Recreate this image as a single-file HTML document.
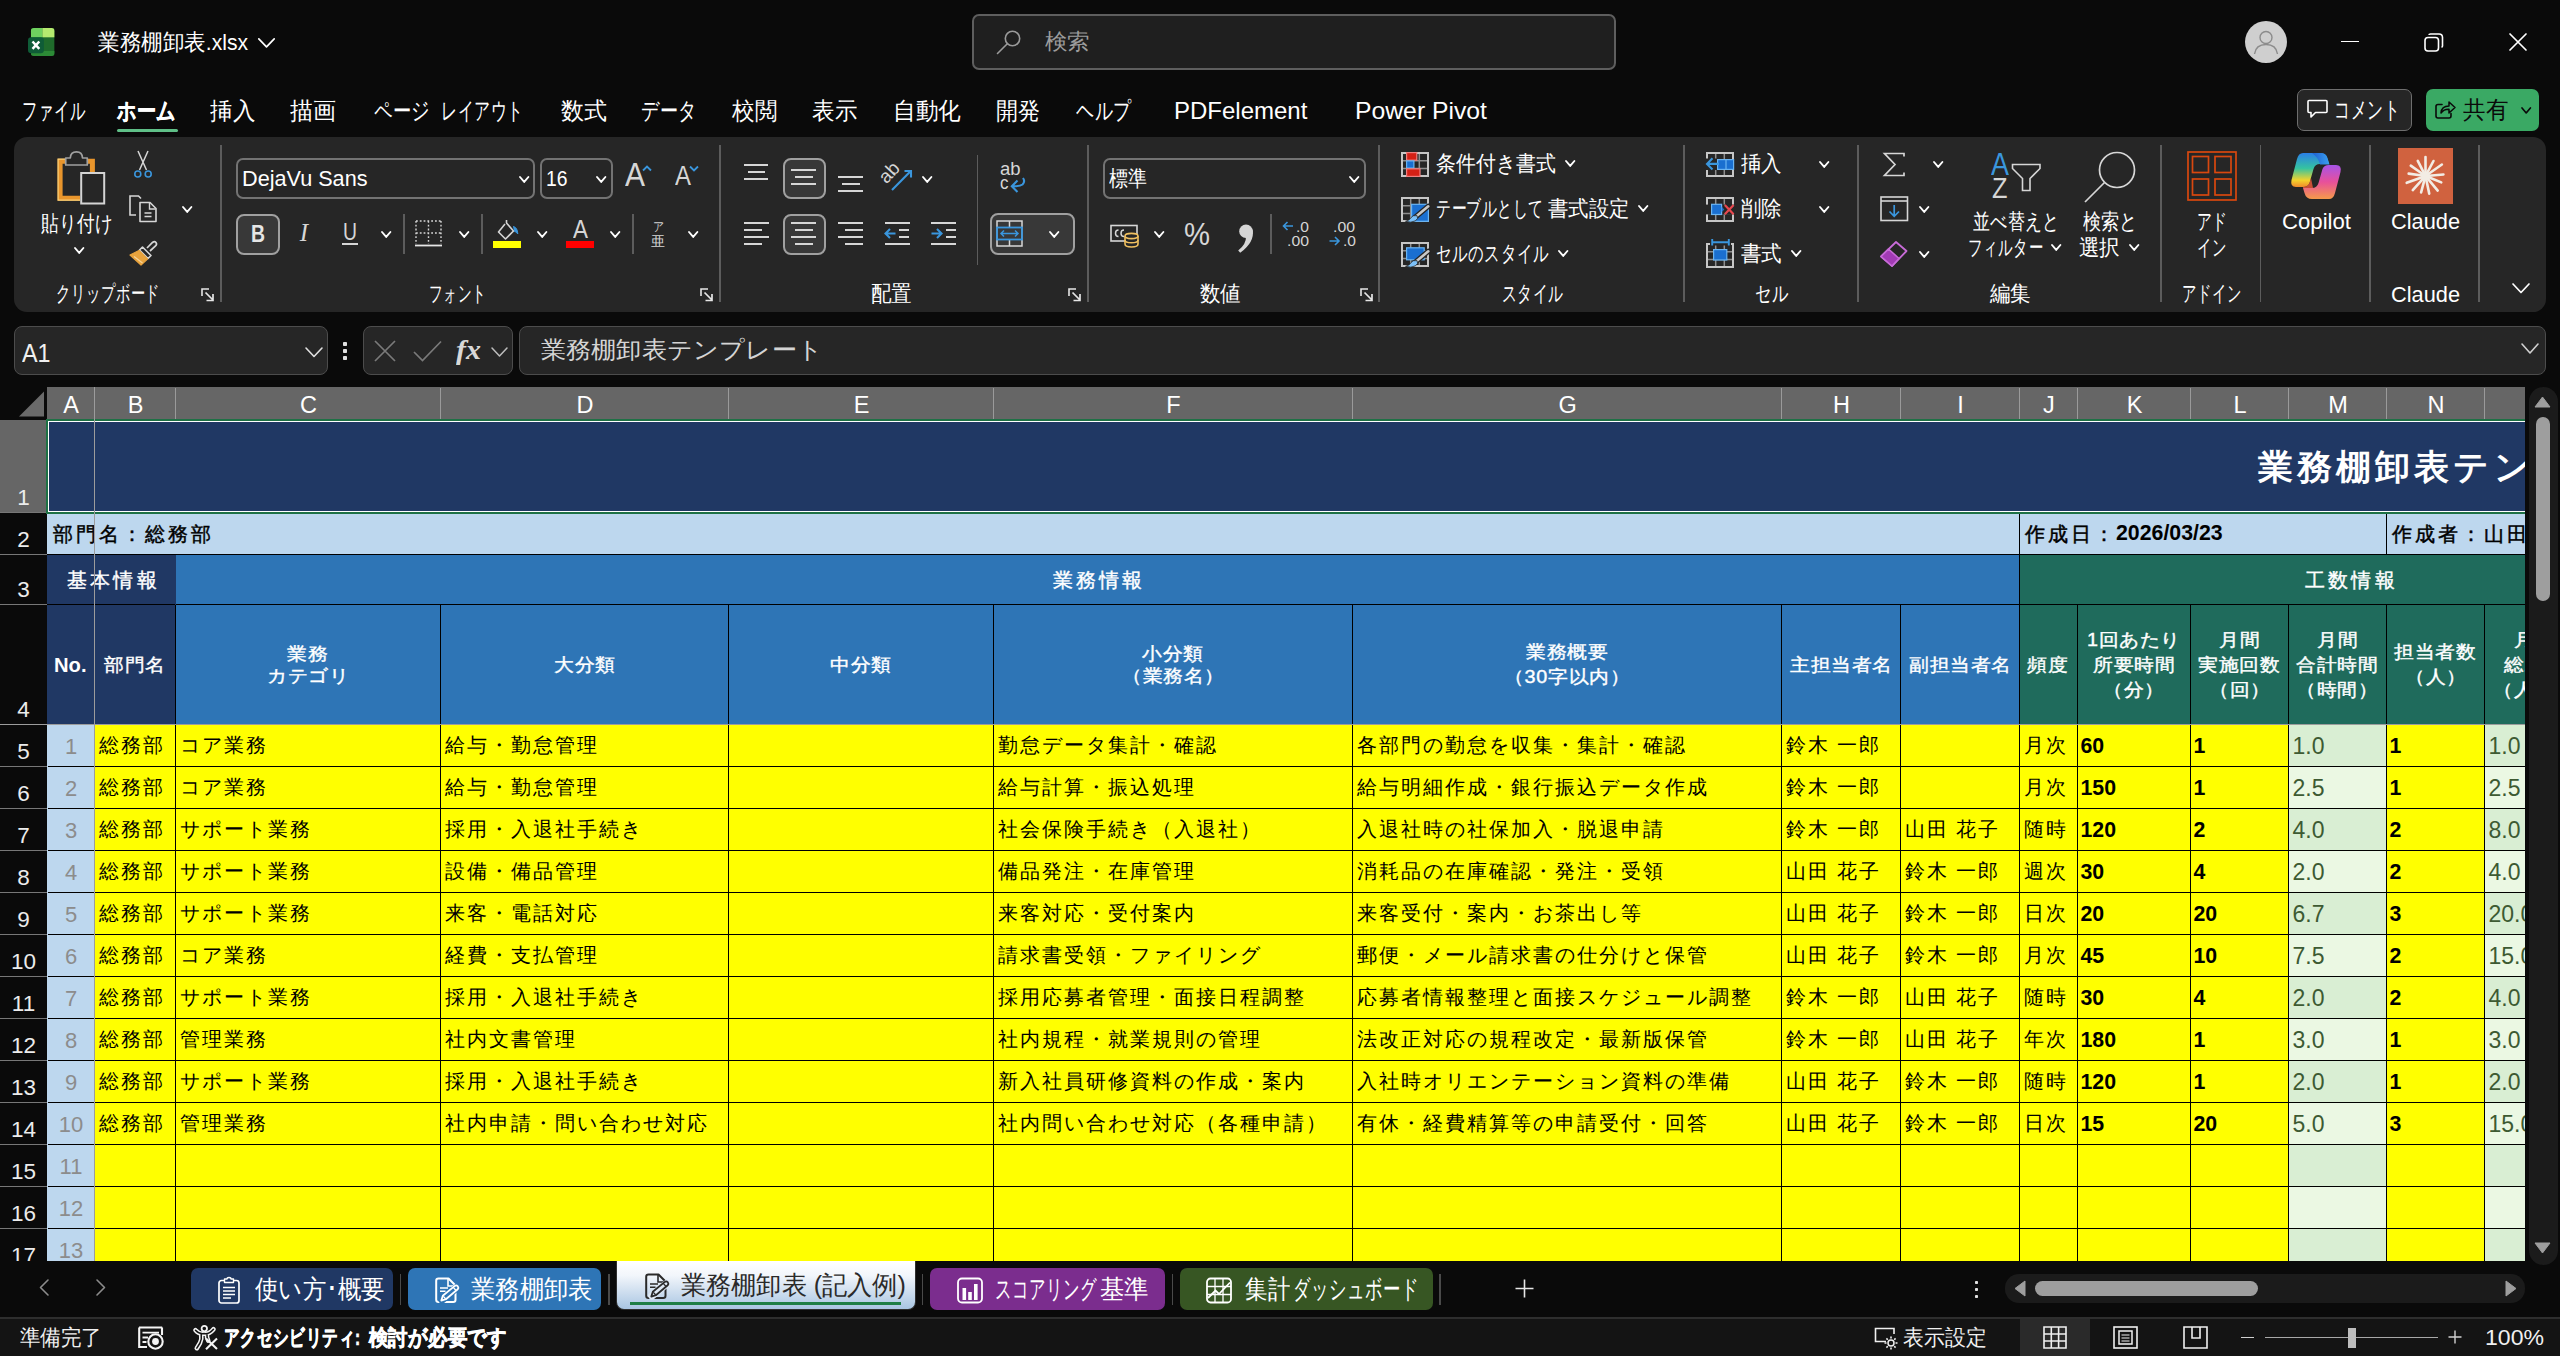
<!DOCTYPE html><html lang="ja"><head><meta charset="utf-8"><title>Excel</title><style>
html,body{margin:0;padding:0;background:#0a0a0a;overflow:hidden;}
body{width:2560px;height:1356px;overflow:hidden;position:relative;font-family:"Liberation Sans",sans-serif;}
.a{position:absolute;}
.t{position:absolute;white-space:nowrap;transform-origin:0 50%;}
svg{overflow:visible;}
</style></head><body>
<svg class="a" style="left:28px;top:28px;" width="27" height="28" viewBox="0 0 27 28"><defs><clipPath id="xlc"><rect x="2.8" y="0" width="23.8" height="27.9" rx="3.2"/></clipPath></defs>
<g clip-path="url(#xlc)"><rect x="2.8" y="0" width="23.8" height="27.9" fill="#1f6b2b"/>
<rect x="2.8" y="0" width="11.6" height="9.3" fill="#6fd15f"/><rect x="14.4" y="0" width="12.2" height="9.3" fill="#b5ea6f"/>
<rect x="2.8" y="9.3" width="11.6" height="13" fill="#2f9a3c"/><rect x="2.8" y="23" width="23.8" height="5" fill="#2c8a36"/></g>
<rect x="0" y="9.3" width="15.9" height="15.9" rx="3.2" fill="#0f5c37"/>
<path d="M4.5 13.5 L11.3 20.8 M11.3 13.5 L4.5 20.8" stroke="#fff" stroke-width="2.5" stroke-linecap="butt"/></svg>
<span class="t" style="left:98.0px;top:28.0px;font-size:22.5px;line-height:29px;color:#ffffff;transform:scaleX(0.9375);">業務棚卸表.xlsx</span>
<svg class="a" style="left:257.5px;top:38px;" width="17" height="10" viewBox="0 0 17 10"><path d="M0.8 0.8 L8.5 8.8 L16.2 0.8" fill="none" stroke="#fff" stroke-width="1.7" stroke-linecap="round" stroke-linejoin="round"/></svg>
<div class="a" style="left:972px;top:14px;width:644px;height:56px;background:#1f1f1f;border:2px solid #5e5e5e;box-sizing:border-box;border-radius:7px;"></div>
<svg class="a" style="left:996px;top:29px;" width="26" height="26" viewBox="0 0 26 26"><circle cx="16.5" cy="9.5" r="7.2" fill="none" stroke="#9a9a9a" stroke-width="1.6"/><path d="M11.3 14.7 L1.5 24.5" stroke="#9a9a9a" stroke-width="1.6" stroke-linecap="round"/></svg>
<span class="t" style="left:1045.0px;top:26.5px;font-size:22px;line-height:29px;color:#9c9c9c;transform:scaleX(1.0227);">検索</span>
<svg class="a" style="left:2245px;top:21px;" width="42" height="42" viewBox="0 0 42 42"><circle cx="21" cy="21" r="21" fill="#cfcfcf"/>
<circle cx="21" cy="16.5" r="6" fill="none" stroke="#8c8c8c" stroke-width="1.4"/>
<path d="M9.5 33 C10.5 25.5 15 23.5 21 23.5 C27 23.5 31.5 25.5 32.5 33" fill="none" stroke="#8c8c8c" stroke-width="1.4"/></svg>
<div class="a" style="left:2341px;top:40.5px;width:18px;height:1.6px;background:#fff;"></div>
<svg class="a" style="left:2424px;top:33px;" width="20" height="19" viewBox="0 0 20 19"><rect x="1" y="4.5" width="13.5" height="13.5" rx="3" fill="none" stroke="#fff" stroke-width="1.6"/><path d="M5 2 Q5 1 6.5 1 H15 Q18.5 1 18.5 4.5 V13 Q18.5 14 17.5 14.3" fill="none" stroke="#fff" stroke-width="1.6"/></svg>
<svg class="a" style="left:2509px;top:33px;" width="18" height="18" viewBox="0 0 18 18"><path d="M1 1 L17 17 M17 1 L1 17" stroke="#fff" stroke-width="1.7" stroke-linecap="round"/></svg>
<span class="t" style="left:22.0px;top:94.5px;font-size:24px;line-height:31px;color:#ffffff;transform:scaleX(0.6400);">ファイル</span>
<span class="t" style="left:117.0px;top:94.5px;font-size:24px;line-height:31px;color:#ffffff;font-weight:700;-webkit-text-stroke:0.5px #ffffff;transform:scaleX(0.7973);">ホーム</span>
<span class="t" style="left:210.0px;top:94.5px;font-size:24px;line-height:31px;color:#ffffff;transform:scaleX(0.9375);">挿入</span>
<span class="t" style="left:290.0px;top:94.5px;font-size:24px;line-height:31px;color:#ffffff;transform:scaleX(0.9583);">描画</span>
<span class="t" style="left:373.5px;top:94.5px;font-size:24px;line-height:31px;color:#ffffff;transform:scaleX(0.7635);">ページ</span>
<span class="t" style="left:440.5px;top:94.5px;font-size:24px;line-height:31px;color:#ffffff;transform:scaleX(0.6640);">レイアウト</span>
<span class="t" style="left:561.0px;top:94.5px;font-size:24px;line-height:31px;color:#ffffff;transform:scaleX(0.9583);">数式</span>
<span class="t" style="left:641.0px;top:94.5px;font-size:24px;line-height:31px;color:#ffffff;transform:scaleX(0.7568);">データ</span>
<span class="t" style="left:732.0px;top:94.5px;font-size:24px;line-height:31px;color:#ffffff;transform:scaleX(0.9375);">校閲</span>
<span class="t" style="left:812.0px;top:94.5px;font-size:24px;line-height:31px;color:#ffffff;transform:scaleX(0.9375);">表示</span>
<span class="t" style="left:893.0px;top:94.5px;font-size:24px;line-height:31px;color:#ffffff;transform:scaleX(0.9444);">自動化</span>
<span class="t" style="left:996.0px;top:94.5px;font-size:24px;line-height:31px;color:#ffffff;transform:scaleX(0.9167);">開発</span>
<span class="t" style="left:1076.0px;top:94.5px;font-size:24px;line-height:31px;color:#ffffff;transform:scaleX(0.7467);">ヘルプ</span>
<span class="t" style="left:1174.0px;top:94.5px;font-size:24px;line-height:31px;color:#ffffff;">PDFelement</span>
<span class="t" style="left:1355.0px;top:94.5px;font-size:24px;line-height:31px;color:#ffffff;transform:scaleX(1.0307);">Power Pivot</span>
<div class="a" style="left:117px;top:128.5px;width:61px;height:3.5px;background:#5fbf87;border-radius:2px;"></div>
<div class="a" style="left:2297px;top:89px;width:115px;height:42px;background:#262626;border:1.5px solid #6e6e6e;box-sizing:border-box;border-radius:7px;"></div>
<svg class="a" style="left:2307px;top:99px;" width="22" height="20" viewBox="0 0 22 20"><path d="M2 1.5 H19 Q20 1.5 20 2.5 V12.5 Q20 13.5 19 13.5 H8.5 L4 18 V13.5 H2 Q1 13.5 1 12.5 V2.5 Q1 1.5 2 1.5 Z" fill="none" stroke="#fff" stroke-width="1.6" stroke-linejoin="round"/></svg>
<span class="t" style="left:2334.0px;top:94.0px;font-size:24px;line-height:31px;color:#ffffff;transform:scaleX(0.6600);">コメント</span>
<div class="a" style="left:2426px;top:89px;width:113px;height:42px;background:#3aa964;border-radius:7px;"></div>
<svg class="a" style="left:2434px;top:99px;" width="22" height="21" viewBox="0 0 22 21"><path d="M8 5.5 H4 Q2 5.5 2 7.5 V17 Q2 19 4 19 H15 Q17 19 17 17 V14.5" fill="none" stroke="#0a0a0a" stroke-width="1.6" stroke-linecap="round"/><path d="M7 14 Q7.5 7 15 7 V3 L21 8.5 L15 14 V10.3 Q10 10 7 14 Z" fill="none" stroke="#0a0a0a" stroke-width="1.5" stroke-linejoin="round"/></svg>
<span class="t" style="left:2463.0px;top:94.0px;font-size:24px;line-height:31px;color:#0a0a0a;transform:scaleX(0.9375);">共有</span>
<svg class="a" style="left:2519.8px;top:106.025px" width="12.4" height="8.95" viewBox="-2 -2 12.4 8.95"><path d="M0 0 L4.2 4.95 L8.4 0" fill="none" stroke="#0a0a0a" stroke-width="1.7" stroke-linecap="round" stroke-linejoin="round"/></svg>
<div class="a" style="left:14px;top:137px;width:2532px;height:175px;background:#262626;border-radius:13px;"></div>
<svg class="a" style="left:57px;top:150px;" width="49" height="55" viewBox="0 0 49 55"><path d="M9 11.2 H3.1 V48.2 H23" fill="none" stroke="#e8952c" stroke-width="5"/><path d="M29 11.2 H35.4 V22.5" fill="none" stroke="#e8952c" stroke-width="5"/>
<path d="M9 9.2 H1.1 V50.2 H23" fill="none" stroke="#f8d07a" stroke-width="1.2"/>
<path d="M8.7 15 V8 H13.3 Q13.5 1.8 19.5 1.8 Q25.3 1.8 25.5 8 H30.3 V15 Z" fill="#262626" stroke="#a0a0a0" stroke-width="1.7" stroke-linejoin="round"/>
<rect x="24.2" y="23" width="23" height="30.5" fill="#262626" stroke="#d4d4d4" stroke-width="2"/></svg>
<span class="t" style="left:41.0px;top:209.0px;font-size:22px;line-height:29px;color:#ffffff;transform:scaleX(0.8000);">貼り付け</span>
<svg class="a" style="left:72.8px;top:245.525px" width="12.4" height="8.95" viewBox="-2 -2 12.4 8.95"><path d="M0 0 L4.2 4.95 L8.4 0" fill="none" stroke="#ffffff" stroke-width="1.9" stroke-linecap="round" stroke-linejoin="round"/></svg>
<svg class="a" style="left:133px;top:149px;" width="20" height="30" viewBox="0 0 20 30"><path d="M5 2 L13.5 21 M15 2 L6.5 21" stroke="#d6d6d6" stroke-width="1.5" fill="none"/><circle cx="4.8" cy="25" r="3" fill="none" stroke="#3a96dd" stroke-width="1.6"/><circle cx="15.2" cy="25" r="3" fill="none" stroke="#3a96dd" stroke-width="1.6"/></svg>
<svg class="a" style="left:128px;top:194px;" width="30" height="30" viewBox="0 0 30 30"><path d="M8 21 H2 V2 H10.5 L13 4.5" fill="none" stroke="#d6d6d6" stroke-width="1.6"/><path d="M12 8.5 H22 L28 14.5 V27.5 H12 Z" fill="#262626" stroke="#d6d6d6" stroke-width="1.6" stroke-linejoin="round"/><path d="M21.5 9 V15 H27.5" fill="none" stroke="#d6d6d6" stroke-width="1.4"/><path d="M16.5 19 H23.5 M16.5 22.5 H23.5" stroke="#d6d6d6" stroke-width="1.5"/></svg>
<svg class="a" style="left:180.8px;top:205.025px" width="12.4" height="8.95" viewBox="-2 -2 12.4 8.95"><path d="M0 0 L4.2 4.95 L8.4 0" fill="none" stroke="#ffffff" stroke-width="1.9" stroke-linecap="round" stroke-linejoin="round"/></svg>
<svg class="a" style="left:128px;top:239px;" width="30" height="28" viewBox="0 0 30 28"><path d="M19 9 L24.5 3.5 Q26.5 1.8 28 3.5 Q29.3 5.2 27.5 7 L22 12" fill="none" stroke="#d6d6d6" stroke-width="1.7"/><path d="M14.5 8 L23 16.5 L20 19.5 L11.5 11 Z" fill="none" stroke="#d6d6d6" stroke-width="1.6" stroke-linejoin="round"/><path d="M11 11.5 L2 16 L13 26 L19.5 20 Z" fill="#e8a33d" stroke="#e8a33d" stroke-width="1.2" stroke-linejoin="round"/><path d="M6 17.5 L14.5 24" stroke="#f6d49a" stroke-width="1.2"/></svg>
<span class="t" style="left:55.5px;top:280.0px;font-size:21.5px;line-height:28px;color:#ffffff;transform:scaleX(0.6500);">クリップボード</span>
<svg class="a" style="left:201px;top:288px;" width="14" height="14" viewBox="0 0 14 14"><path d="M1 8 V1 H8" fill="none" stroke="#e6e6e6" stroke-width="1.6"/><path d="M4.5 4.5 L12 12 M12 6 V12.5 H5.5" fill="none" stroke="#e6e6e6" stroke-width="1.7"/></svg>
<div class="a" style="left:220.25px;top:145px;width:1.5px;height:157px;background:#5c5c5c;"></div>
<div class="a" style="left:236px;top:157.5px;width:299px;height:41.5px;border:2px solid #737373;box-sizing:border-box;border-radius:7px;"></div>
<span class="t" style="left:241.5px;top:164.5px;font-size:21.5px;line-height:28px;color:#ffffff;transform:scaleX(1.0064);">DejaVu Sans</span>
<svg class="a" style="left:517.8px;top:175.025px" width="12.4" height="8.95" viewBox="-2 -2 12.4 8.95"><path d="M0 0 L4.2 4.95 L8.4 0" fill="none" stroke="#ffffff" stroke-width="1.9" stroke-linecap="round" stroke-linejoin="round"/></svg>
<div class="a" style="left:539.5px;top:157.5px;width:73px;height:41.5px;border:2px solid #737373;box-sizing:border-box;border-radius:7px;"></div>
<span class="t" style="left:545.5px;top:164.5px;font-size:21.5px;line-height:28px;color:#ffffff;transform:scaleX(0.8988);">16</span>
<svg class="a" style="left:594.8px;top:175.025px" width="12.4" height="8.95" viewBox="-2 -2 12.4 8.95"><path d="M0 0 L4.2 4.95 L8.4 0" fill="none" stroke="#ffffff" stroke-width="1.9" stroke-linecap="round" stroke-linejoin="round"/></svg>
<span class="t" style="left:625.0px;top:153.0px;font-size:33px;line-height:43px;color:#d6d6d6;transform:scaleX(0.9084);">A</span>
<svg class="a" style="left:642px;top:165px;" width="10" height="7" viewBox="0 0 10 7"><path d="M1 5.5 L5 1.5 L9 5.5" fill="none" stroke="#3a96dd" stroke-width="1.8"/></svg>
<span class="t" style="left:674.5px;top:159.0px;font-size:27px;line-height:35px;color:#d6d6d6;transform:scaleX(0.8881);">A</span>
<svg class="a" style="left:689px;top:165px;" width="10" height="7" viewBox="0 0 10 7"><path d="M1 1.5 L5 5.5 L9 1.5" fill="none" stroke="#3a96dd" stroke-width="1.8"/></svg>
<div class="a" style="left:236px;top:213.5px;width:43.5px;height:41px;background:#383838;border:2px solid #a0a0a0;box-sizing:border-box;border-radius:8px;"></div>
<span class="t" style="left:250.5px;top:217.5px;font-size:24px;line-height:31px;color:#e6e6e6;font-weight:700;transform:scaleX(0.8072);">B</span>
<span class="t" style="left:299.8px;top:217.0px;font-size:25px;line-height:32px;color:#d6d6d6;font-family:'Liberation Serif',serif;font-style:italic;">I</span>
<span class="t" style="left:342.5px;top:216.5px;font-size:23px;line-height:30px;color:#d6d6d6;transform:scaleX(0.8421);">U</span>
<div class="a" style="left:342px;top:243.3px;width:16px;height:1.6px;background:#d6d6d6;"></div>
<svg class="a" style="left:379.8px;top:230.025px" width="12.4" height="8.95" viewBox="-2 -2 12.4 8.95"><path d="M0 0 L4.2 4.95 L8.4 0" fill="none" stroke="#ffffff" stroke-width="1.9" stroke-linecap="round" stroke-linejoin="round"/></svg>
<div class="a" style="left:403.25px;top:214px;width:1.5px;height:40px;background:#5c5c5c;"></div>
<svg class="a" style="left:415px;top:220px;" width="27" height="27" viewBox="0 0 27 27"><g stroke="#d6d6d6" stroke-width="1.4" stroke-dasharray="1.8 2" fill="none"><path d="M1 1 H26 M1 13 H26 M1 1 V24 M13.5 1 V24 M26 1 V24"/></g><path d="M0 25.5 H27" stroke="#e6e6e6" stroke-width="1.8"/></svg>
<svg class="a" style="left:457.8px;top:230.025px" width="12.4" height="8.95" viewBox="-2 -2 12.4 8.95"><path d="M0 0 L4.2 4.95 L8.4 0" fill="none" stroke="#ffffff" stroke-width="1.9" stroke-linecap="round" stroke-linejoin="round"/></svg>
<div class="a" style="left:481.25px;top:214px;width:1.5px;height:40px;background:#5c5c5c;"></div>
<svg class="a" style="left:496px;top:219px;" width="24" height="22" viewBox="0 0 24 22"><path d="M9 5 L2.5 13 L9.5 20 L17.5 12 L10.5 4 V1" fill="none" stroke="#d6d6d6" stroke-width="1.6" stroke-linejoin="round"/><path d="M17 7.5 Q21.5 8 21.8 15 Q20 12.5 18 12" fill="#3a96dd" stroke="#3a96dd" stroke-width="1"/></svg>
<div class="a" style="left:493px;top:241px;width:28px;height:6.5px;background:#ffff00;"></div>
<svg class="a" style="left:535.8px;top:230.025px" width="12.4" height="8.95" viewBox="-2 -2 12.4 8.95"><path d="M0 0 L4.2 4.95 L8.4 0" fill="none" stroke="#ffffff" stroke-width="1.9" stroke-linecap="round" stroke-linejoin="round"/></svg>
<span class="t" style="left:572.5px;top:213.0px;font-size:25px;line-height:32px;color:#d6d6d6;transform:scaleX(0.8989);">A</span>
<div class="a" style="left:566px;top:241px;width:28px;height:6.5px;background:#ff0000;"></div>
<svg class="a" style="left:608.8px;top:230.025px" width="12.4" height="8.95" viewBox="-2 -2 12.4 8.95"><path d="M0 0 L4.2 4.95 L8.4 0" fill="none" stroke="#ffffff" stroke-width="1.9" stroke-linecap="round" stroke-linejoin="round"/></svg>
<div class="a" style="left:632.25px;top:214px;width:1.5px;height:40px;background:#5c5c5c;"></div>
<span class="t" style="left:652.5px;top:217.5px;font-size:13px;line-height:17px;color:#d6d6d6;transform:scaleX(0.8462);">ア</span>
<span class="t" style="left:651.0px;top:231.5px;font-size:14px;line-height:18px;color:#d6d6d6;">亜</span>
<svg class="a" style="left:686.8px;top:230.025px" width="12.4" height="8.95" viewBox="-2 -2 12.4 8.95"><path d="M0 0 L4.2 4.95 L8.4 0" fill="none" stroke="#ffffff" stroke-width="1.9" stroke-linecap="round" stroke-linejoin="round"/></svg>
<span class="t" style="left:429.0px;top:280.0px;font-size:21.5px;line-height:28px;color:#ffffff;transform:scaleX(0.6196);">フォント</span>
<svg class="a" style="left:700px;top:288px;" width="14" height="14" viewBox="0 0 14 14"><path d="M1 8 V1 H8" fill="none" stroke="#e6e6e6" stroke-width="1.6"/><path d="M4.5 4.5 L12 12 M12 6 V12.5 H5.5" fill="none" stroke="#e6e6e6" stroke-width="1.7"/></svg>
<div class="a" style="left:719.25px;top:145px;width:1.5px;height:157px;background:#5c5c5c;"></div>
<div class="a" style="left:744.0px;top:164.0px;width:24px;height:2.0px;background:#d6d6d6;"></div>
<div class="a" style="left:747.5px;top:171.0px;width:17px;height:2.0px;background:#d6d6d6;"></div>
<div class="a" style="left:744.0px;top:178.0px;width:24px;height:2.0px;background:#d6d6d6;"></div>
<div class="a" style="left:782.5px;top:157.5px;width:43px;height:41px;background:#383838;border:2px solid #a0a0a0;box-sizing:border-box;border-radius:8px;"></div>
<div class="a" style="left:791.0px;top:169.0px;width:25px;height:2.0px;background:#d6d6d6;"></div>
<div class="a" style="left:794.5px;top:176.0px;width:18px;height:2.0px;background:#d6d6d6;"></div>
<div class="a" style="left:791.0px;top:183.0px;width:25px;height:2.0px;background:#d6d6d6;"></div>
<div class="a" style="left:838.0px;top:176.0px;width:25px;height:2.0px;background:#d6d6d6;"></div>
<div class="a" style="left:841.5px;top:183.0px;width:18px;height:2.0px;background:#d6d6d6;"></div>
<div class="a" style="left:838.0px;top:190.0px;width:25px;height:2.0px;background:#d6d6d6;"></div>
<svg class="a" style="left:880px;top:162px;" width="33" height="30" viewBox="0 0 33 30"><g transform="translate(6.5 22.5) rotate(-47)"><text x="0" y="0" font-family="Liberation Sans,sans-serif" font-size="19" fill="#d6d6d6">ab</text></g><path d="M12 28 L30.5 9.3 M24.5 9 H31 V15.6" fill="none" stroke="#3a96dd" stroke-width="2.1"/></svg>
<svg class="a" style="left:920.8px;top:174.525px" width="12.4" height="8.95" viewBox="-2 -2 12.4 8.95"><path d="M0 0 L4.2 4.95 L8.4 0" fill="none" stroke="#ffffff" stroke-width="1.9" stroke-linecap="round" stroke-linejoin="round"/></svg>
<div class="a" style="left:976.75px;top:155px;width:1.5px;height:110px;background:#5c5c5c;"></div>
<span class="t" style="left:1000.0px;top:158.0px;font-size:18px;line-height:23px;color:#d6d6d6;transform:scaleX(1.0284);">ab</span>
<span class="t" style="left:1000.0px;top:172.0px;font-size:18px;line-height:23px;color:#d6d6d6;transform:scaleX(0.9444);">c</span>
<svg class="a" style="left:1010px;top:177px;" width="16" height="16" viewBox="0 0 16 16"><path d="M13 1 Q15.5 4.5 12.5 7.5 Q10 9.5 2.5 9.3 M7.5 3.5 L1.8 9.2 L7.5 15" fill="none" stroke="#3a96dd" stroke-width="2.1"/></svg>
<div class="a" style="left:744px;top:222.0px;width:25px;height:2.0px;background:#d6d6d6;"></div>
<div class="a" style="left:744px;top:229.0px;width:18px;height:2.0px;background:#d6d6d6;"></div>
<div class="a" style="left:744px;top:236.0px;width:25px;height:2.0px;background:#d6d6d6;"></div>
<div class="a" style="left:744px;top:243.0px;width:18px;height:2.0px;background:#d6d6d6;"></div>
<div class="a" style="left:782.5px;top:213.5px;width:43px;height:41px;background:#383838;border:2px solid #a0a0a0;box-sizing:border-box;border-radius:8px;"></div>
<div class="a" style="left:791.0px;top:222.0px;width:25px;height:2.0px;background:#d6d6d6;"></div>
<div class="a" style="left:794.5px;top:229.0px;width:18px;height:2.0px;background:#d6d6d6;"></div>
<div class="a" style="left:791.0px;top:236.0px;width:25px;height:2.0px;background:#d6d6d6;"></div>
<div class="a" style="left:794.5px;top:243.0px;width:18px;height:2.0px;background:#d6d6d6;"></div>
<div class="a" style="left:838px;top:222.0px;width:25px;height:2.0px;background:#d6d6d6;"></div>
<div class="a" style="left:845px;top:229.0px;width:18px;height:2.0px;background:#d6d6d6;"></div>
<div class="a" style="left:838px;top:236.0px;width:25px;height:2.0px;background:#d6d6d6;"></div>
<div class="a" style="left:845px;top:243.0px;width:18px;height:2.0px;background:#d6d6d6;"></div>
<div class="a" style="left:884.5px;top:222.0px;width:25px;height:2.0px;background:#d6d6d6;"></div>
<div class="a" style="left:898.8px;top:229.0px;width:10.7px;height:2.0px;background:#d6d6d6;"></div>
<div class="a" style="left:898.8px;top:236.0px;width:10.7px;height:2.0px;background:#d6d6d6;"></div>
<div class="a" style="left:884.5px;top:243.0px;width:25px;height:2.0px;background:#d6d6d6;"></div>
<svg class="a" style="left:884px;top:227.5px;" width="12" height="11" viewBox="0 0 12 11"><path d="M11.5 5.5 H1.5 M6 1 L1.5 5.5 L6 10" fill="none" stroke="#3a96dd" stroke-width="2.1"/></svg>
<div class="a" style="left:931.4px;top:222.0px;width:25px;height:2.0px;background:#d6d6d6;"></div>
<div class="a" style="left:945.6999999999999px;top:229.0px;width:10.7px;height:2.0px;background:#d6d6d6;"></div>
<div class="a" style="left:945.6999999999999px;top:236.0px;width:10.7px;height:2.0px;background:#d6d6d6;"></div>
<div class="a" style="left:931.4px;top:243.0px;width:25px;height:2.0px;background:#d6d6d6;"></div>
<svg class="a" style="left:931px;top:227.5px;" width="12" height="11" viewBox="0 0 12 11"><path d="M0.5 5.5 H10.5 M6 1 L10.5 5.5 L6 10" fill="none" stroke="#3a96dd" stroke-width="2.1"/></svg>
<div class="a" style="left:989.5px;top:213px;width:85.5px;height:42px;background:#383838;border:2px solid #a0a0a0;box-sizing:border-box;border-radius:8px;"></div>
<svg class="a" style="left:996px;top:220px;" width="27" height="27" viewBox="0 0 27 27"><path d="M1 1 H26 V26 H1 Z M13.5 1 V7.5 M13.5 19.5 V26" fill="none" stroke="#d6d6d6" stroke-width="1.5"/><rect x="1" y="7.5" width="25" height="12" fill="none" stroke="#3a96dd" stroke-width="1.8"/><path d="M5 13.5 H22 M8 10.5 L5 13.5 L8 16.5 M19 10.5 L22 13.5 L19 16.5" fill="none" stroke="#3a96dd" stroke-width="1.5"/></svg>
<svg class="a" style="left:1047.8px;top:230.025px" width="12.4" height="8.95" viewBox="-2 -2 12.4 8.95"><path d="M0 0 L4.2 4.95 L8.4 0" fill="none" stroke="#ffffff" stroke-width="1.9" stroke-linecap="round" stroke-linejoin="round"/></svg>
<span class="t" style="left:870.5px;top:280.0px;font-size:21.5px;line-height:28px;color:#ffffff;transform:scaleX(0.9318);">配置</span>
<svg class="a" style="left:1068px;top:288px;" width="14" height="14" viewBox="0 0 14 14"><path d="M1 8 V1 H8" fill="none" stroke="#e6e6e6" stroke-width="1.6"/><path d="M4.5 4.5 L12 12 M12 6 V12.5 H5.5" fill="none" stroke="#e6e6e6" stroke-width="1.7"/></svg>
<div class="a" style="left:1087.25px;top:145px;width:1.5px;height:157px;background:#5c5c5c;"></div>
<div class="a" style="left:1103px;top:157.5px;width:262.5px;height:41.5px;border:2px solid #737373;box-sizing:border-box;border-radius:7px;"></div>
<span class="t" style="left:1109.0px;top:164.5px;font-size:21.5px;line-height:28px;color:#ffffff;transform:scaleX(0.8636);">標準</span>
<svg class="a" style="left:1347.8px;top:175.025px" width="12.4" height="8.95" viewBox="-2 -2 12.4 8.95"><path d="M0 0 L4.2 4.95 L8.4 0" fill="none" stroke="#ffffff" stroke-width="1.9" stroke-linecap="round" stroke-linejoin="round"/></svg>
<svg class="a" style="left:1110px;top:224px;" width="30" height="24" viewBox="0 0 30 24"><rect x="1" y="1.5" width="26" height="15.5" fill="none" stroke="#d6d6d6" stroke-width="1.6"/><path d="M8.5 6 Q5.5 6 5.5 9.2 Q5.5 12.5 8.5 12.5 M14 6 Q11 6 11 9.2 Q11 12.5 14 12.5" fill="none" stroke="#d6d6d6" stroke-width="1.5"/><path d="M15 12 V20 Q15 23 21.5 23 Q28 23 28 20 V12" fill="#262626" stroke="#f0c060" stroke-width="1.6"/><ellipse cx="21.5" cy="12" rx="6.5" ry="2.6" fill="#262626" stroke="#f0c060" stroke-width="1.6"/><path d="M15 16 Q15 18.8 21.5 18.8 Q28 18.8 28 16" fill="none" stroke="#f0c060" stroke-width="1.5"/></svg>
<svg class="a" style="left:1152.8px;top:230.025px" width="12.4" height="8.95" viewBox="-2 -2 12.4 8.95"><path d="M0 0 L4.2 4.95 L8.4 0" fill="none" stroke="#ffffff" stroke-width="1.9" stroke-linecap="round" stroke-linejoin="round"/></svg>
<span class="t" style="left:1184.0px;top:212.5px;font-size:32px;line-height:42px;color:#d6d6d6;transform:scaleX(0.9138);">%</span>
<svg class="a" style="left:1237px;top:223.5px;" width="17" height="30" viewBox="0 0 17 30"><circle cx="9" cy="7.3" r="6.8" fill="#d6d6d6"/><path d="M15.6 5.5 Q18 18 3.2 28.8 L1.2 26.5 Q9.5 20 9 12 Z" fill="#d6d6d6"/></svg>
<div class="a" style="left:1270.25px;top:214px;width:1.5px;height:40px;background:#5c5c5c;"></div>
<span class="t" style="left:1296.0px;top:216.5px;font-size:15px;line-height:20px;color:#d6d6d6;transform:scaleX(1.0387);">.0</span>
<span class="t" style="left:1286.5px;top:230.5px;font-size:15px;line-height:20px;color:#d6d6d6;transform:scaleX(1.0547);">.00</span>
<svg class="a" style="left:1282px;top:221px;" width="12" height="10" viewBox="0 0 12 10"><path d="M11 5 H1.5 M5.5 1 L1.5 5 L5.5 9" fill="none" stroke="#3a96dd" stroke-width="1.6"/></svg>
<span class="t" style="left:1333.0px;top:216.5px;font-size:15px;line-height:20px;color:#d6d6d6;transform:scaleX(1.0547);">.00</span>
<span class="t" style="left:1342.5px;top:230.5px;font-size:15px;line-height:20px;color:#d6d6d6;transform:scaleX(1.0387);">.0</span>
<svg class="a" style="left:1329px;top:236px;" width="12" height="10" viewBox="0 0 12 10"><path d="M0.5 5 H10 M6 1 L10 5 L6 9" fill="none" stroke="#3a96dd" stroke-width="1.6"/></svg>
<span class="t" style="left:1199.5px;top:280.0px;font-size:21.5px;line-height:28px;color:#ffffff;transform:scaleX(0.9318);">数値</span>
<svg class="a" style="left:1359.5px;top:288px;" width="14" height="14" viewBox="0 0 14 14"><path d="M1 8 V1 H8" fill="none" stroke="#e6e6e6" stroke-width="1.6"/><path d="M4.5 4.5 L12 12 M12 6 V12.5 H5.5" fill="none" stroke="#e6e6e6" stroke-width="1.7"/></svg>
<div class="a" style="left:1378.25px;top:145px;width:1.5px;height:157px;background:#5c5c5c;"></div>
<svg class="a" style="left:1401px;top:151.5px;" width="28" height="25" viewBox="0 0 28 25"><g fill="none"><path d="M1 8.8 H27 M1 16.5 H27 M9.7 1 V24 M18.3 1 V24" stroke="#8e8e8e" stroke-width="1.5"/><rect x="1" y="1" width="26" height="23" stroke="#c6c6c6" stroke-width="2"/></g><rect x="5.6" y="0.6" width="10.2" height="7.6" fill="#d42015" stroke="#f07f7f" stroke-width="1.2"/><rect x="5.6" y="8.9" width="7.3" height="7.2" fill="#1a6fd0" stroke="#6ab4f2" stroke-width="1.2"/><rect x="5.6" y="16.8" width="13.4" height="7.6" fill="#d42015" stroke="#f07f7f" stroke-width="1.2"/></svg>
<span class="t" style="left:1436.0px;top:148.5px;font-size:22px;line-height:29px;color:#ffffff;transform:scaleX(0.9023);">条件付き書式</span>
<svg class="a" style="left:1563.8px;top:159.025px" width="12.4" height="8.95" viewBox="-2 -2 12.4 8.95"><path d="M0 0 L4.2 4.95 L8.4 0" fill="none" stroke="#ffffff" stroke-width="1.9" stroke-linecap="round" stroke-linejoin="round"/></svg>
<svg class="a" style="left:1401px;top:196.5px;" width="28" height="25" viewBox="0 0 28 25"><g fill="none"><path d="M1 8.8 H27 M1 16.5 H27 M9.7 1 V24 M18.3 1 V24" stroke="#8e8e8e" stroke-width="1.5"/><rect x="1" y="1" width="26" height="23" stroke="#c6c6c6" stroke-width="2"/></g><rect x="10.6" y="7.3" width="16.8" height="17" fill="#1a6fd0" stroke="#6ab4f2" stroke-width="1.2"/><path d="M27.3 9.3 L14.5 20" stroke="#262626" stroke-width="5.2" stroke-linecap="round"/><path d="M27.3 9.3 L14.5 20" stroke="#c8c8c8" stroke-width="2.6" stroke-linecap="round"/><path d="M16 18.6 Q18 21.5 14.5 23.8 Q10 26.3 4.5 24.3 Q8.5 23.6 9.8 20.8 Q11.5 17.8 16 18.6 Z" fill="#7cc0f8" stroke="#262626" stroke-width="0.8"/></svg>
<span class="t" style="left:1436.0px;top:193.5px;font-size:22px;line-height:29px;color:#ffffff;transform:scaleX(0.6750);">テーブルとして</span>
<span class="t" style="left:1547.5px;top:193.5px;font-size:22px;line-height:29px;color:#ffffff;transform:scaleX(0.9261);">書式設定</span>
<svg class="a" style="left:1636.8px;top:204.025px" width="12.4" height="8.95" viewBox="-2 -2 12.4 8.95"><path d="M0 0 L4.2 4.95 L8.4 0" fill="none" stroke="#ffffff" stroke-width="1.9" stroke-linecap="round" stroke-linejoin="round"/></svg>
<svg class="a" style="left:1401px;top:241.5px;" width="28" height="25" viewBox="0 0 28 25"><g fill="none"><path d="M1 8.8 H27 M1 16.5 H27 M9.7 1 V24 M18.3 1 V24" stroke="#8e8e8e" stroke-width="1.5"/><rect x="1" y="1" width="26" height="23" stroke="#c6c6c6" stroke-width="2"/></g><rect x="5.6" y="5.8" width="17.6" height="12" fill="#1a6fd0" stroke="#6ab4f2" stroke-width="1.2"/><path d="M27.3 9.3 L14.5 20" stroke="#262626" stroke-width="5.2" stroke-linecap="round"/><path d="M27.3 9.3 L14.5 20" stroke="#c8c8c8" stroke-width="2.6" stroke-linecap="round"/><path d="M16 18.6 Q18 21.5 14.5 23.8 Q10 26.3 4.5 24.3 Q8.5 23.6 9.8 20.8 Q11.5 17.8 16 18.6 Z" fill="#7cc0f8" stroke="#262626" stroke-width="0.8"/></svg>
<span class="t" style="left:1436.0px;top:238.5px;font-size:22px;line-height:29px;color:#ffffff;transform:scaleX(0.7019);">セルのスタイル</span>
<svg class="a" style="left:1556.8px;top:249.025px" width="12.4" height="8.95" viewBox="-2 -2 12.4 8.95"><path d="M0 0 L4.2 4.95 L8.4 0" fill="none" stroke="#ffffff" stroke-width="1.9" stroke-linecap="round" stroke-linejoin="round"/></svg>
<span class="t" style="left:1501.5px;top:280.0px;font-size:21.5px;line-height:28px;color:#ffffff;transform:scaleX(0.6739);">スタイル</span>
<div class="a" style="left:1683.25px;top:145px;width:1.5px;height:157px;background:#5c5c5c;"></div>
<svg class="a" style="left:1706px;top:151.5px;" width="28" height="25" viewBox="0 0 28 25"><g fill="none"><path d="M1 8.8 H27 M1 16.5 H27 M9.7 1 V24 M18.3 1 V24" stroke="#8e8e8e" stroke-width="1.5"/><rect x="1" y="1" width="26" height="23" stroke="#c6c6c6" stroke-width="2"/></g><rect x="0" y="6.5" width="12" height="11.5" fill="#262626"/><rect x="11.6" y="7.6" width="16" height="9.8" fill="#1a6fd0" stroke="#6ab4f2" stroke-width="1.2"/><path d="M20 7.6 V17.4" stroke="#6ab4f2" stroke-width="1.2"/><path d="M13 11.9 H1 M6.5 6.3 L1 11.9 L6.5 17.5" fill="none" stroke="#3a96dd" stroke-width="2.1"/></svg>
<span class="t" style="left:1741.0px;top:148.5px;font-size:22px;line-height:29px;color:#ffffff;transform:scaleX(0.9318);">挿入</span>
<svg class="a" style="left:1817.8px;top:160.025px" width="12.4" height="8.95" viewBox="-2 -2 12.4 8.95"><path d="M0 0 L4.2 4.95 L8.4 0" fill="none" stroke="#ffffff" stroke-width="1.9" stroke-linecap="round" stroke-linejoin="round"/></svg>
<svg class="a" style="left:1706px;top:196.5px;" width="28" height="25" viewBox="0 0 28 25"><g fill="none"><path d="M1 8.8 H27 M1 16.5 H27 M9.7 1 V24 M18.3 1 V24" stroke="#8e8e8e" stroke-width="1.5"/><rect x="1" y="1" width="26" height="23" stroke="#c6c6c6" stroke-width="2"/></g><rect x="-1" y="7.6" width="30" height="9.8" fill="#262626"/><rect x="5.6" y="7.3" width="10" height="10.2" fill="#1a6fd0" stroke="#6ab4f2" stroke-width="1.2"/><path d="M15.6 9.5 L18.3 12.4 L15.6 15.3 Z" fill="#1a6fd0"/><path d="M18.8 7.9 L27.6 17.2 M27.6 7.9 L18.8 17.2" stroke="#e8484f" stroke-width="2.2"/></svg>
<span class="t" style="left:1741.0px;top:193.5px;font-size:22px;line-height:29px;color:#ffffff;transform:scaleX(0.9318);">削除</span>
<svg class="a" style="left:1817.8px;top:205.025px" width="12.4" height="8.95" viewBox="-2 -2 12.4 8.95"><path d="M0 0 L4.2 4.95 L8.4 0" fill="none" stroke="#ffffff" stroke-width="1.9" stroke-linecap="round" stroke-linejoin="round"/></svg>
<svg class="a" style="left:1706px;top:242.7px;" width="28" height="25" viewBox="0 0 28 25"><g fill="none"><path d="M1 8.8 H27 M1 16.5 H27 M9.7 1 V24 M18.3 1 V24" stroke="#8e8e8e" stroke-width="1.5"/><rect x="1" y="1" width="26" height="23" stroke="#c6c6c6" stroke-width="2"/></g><rect x="7.6" y="6.6" width="13.2" height="10.4" fill="#1a6fd0" stroke="#6ab4f2" stroke-width="1.2"/></svg>
<svg class="a" style="left:1711px;top:239px;" width="19" height="6.5" viewBox="0 0 19 6.5"><rect x="-1" y="0" width="21" height="6.5" fill="#262626"/><path d="M1 3.2 H18 M1.2 0 V6.5 M17.8 0 V6.5" fill="none" stroke="#3a96dd" stroke-width="1.9"/></svg>
<span class="t" style="left:1741.0px;top:238.5px;font-size:22px;line-height:29px;color:#ffffff;transform:scaleX(0.9318);">書式</span>
<svg class="a" style="left:1789.8px;top:249.025px" width="12.4" height="8.95" viewBox="-2 -2 12.4 8.95"><path d="M0 0 L4.2 4.95 L8.4 0" fill="none" stroke="#ffffff" stroke-width="1.9" stroke-linecap="round" stroke-linejoin="round"/></svg>
<span class="t" style="left:1755.0px;top:280.0px;font-size:21.5px;line-height:28px;color:#ffffff;transform:scaleX(0.7391);">セル</span>
<div class="a" style="left:1857.25px;top:145px;width:1.5px;height:157px;background:#5c5c5c;"></div>
<svg class="a" style="left:1883px;top:152px;" width="23" height="25" viewBox="0 0 23 25"><path d="M21 4.5 V1.5 H1.5 L12 12.5 L1.5 23.5 H21 V20.5" fill="none" stroke="#d6d6d6" stroke-width="1.7" stroke-linejoin="miter"/></svg>
<svg class="a" style="left:1931.8px;top:159.525px" width="12.4" height="8.95" viewBox="-2 -2 12.4 8.95"><path d="M0 0 L4.2 4.95 L8.4 0" fill="none" stroke="#ffffff" stroke-width="1.9" stroke-linecap="round" stroke-linejoin="round"/></svg>
<svg class="a" style="left:1880px;top:196px;" width="29" height="26" viewBox="0 0 29 26"><rect x="1" y="1" width="26.5" height="23.5" fill="none" stroke="#d6d6d6" stroke-width="1.6"/><path d="M1 5 H27.5" stroke="#d6d6d6" stroke-width="1.6"/><path d="M14.2 9 V20 M9.5 15.5 L14.2 20.3 L19 15.5" fill="none" stroke="#3a96dd" stroke-width="1.7"/></svg>
<svg class="a" style="left:1917.8px;top:205.025px" width="12.4" height="8.95" viewBox="-2 -2 12.4 8.95"><path d="M0 0 L4.2 4.95 L8.4 0" fill="none" stroke="#ffffff" stroke-width="1.9" stroke-linecap="round" stroke-linejoin="round"/></svg>
<svg class="a" style="left:1879px;top:240px;" width="30" height="28" viewBox="0 0 30 28"><path d="M17 2 L27.5 11 L13 26 L2 16.5 Z" fill="none" stroke="#c86bd8" stroke-width="1.8" stroke-linejoin="round"/><path d="M2 16.5 L9.5 9 L20 18.5 L13 26 Z" fill="#a23bb5" stroke="#c86bd8" stroke-width="1.6" stroke-linejoin="round"/></svg>
<svg class="a" style="left:1917.8px;top:250.025px" width="12.4" height="8.95" viewBox="-2 -2 12.4 8.95"><path d="M0 0 L4.2 4.95 L8.4 0" fill="none" stroke="#ffffff" stroke-width="1.9" stroke-linecap="round" stroke-linejoin="round"/></svg>
<span class="t" style="left:1991.0px;top:143.5px;font-size:30.5px;line-height:40px;color:#3a96dd;transform:scaleX(0.8848);">A</span>
<span class="t" style="left:1991.5px;top:169.3px;font-size:29.5px;line-height:38px;color:#d6d6d6;transform:scaleX(0.8596);">Z</span>
<svg class="a" style="left:2011px;top:163px;" width="31" height="30" viewBox="0 0 31 30"><path d="M1.5 1.5 H29 V5.5 L19 15.5 V27.5 H11.5 V15.5 L1.5 5.5 Z" fill="none" stroke="#d6d6d6" stroke-width="1.6" stroke-linejoin="miter"/></svg>
<span class="t" style="left:1972.5px;top:206.5px;font-size:22px;line-height:29px;color:#ffffff;transform:scaleX(0.7699);">並べ替えと</span>
<span class="t" style="left:1967.5px;top:233.0px;font-size:22px;line-height:29px;color:#ffffff;transform:scaleX(0.6579);">フィルター</span>
<svg class="a" style="left:2049.8px;top:242.525px" width="12.4" height="8.95" viewBox="-2 -2 12.4 8.95"><path d="M0 0 L4.2 4.95 L8.4 0" fill="none" stroke="#ffffff" stroke-width="1.9" stroke-linecap="round" stroke-linejoin="round"/></svg>
<svg class="a" style="left:2084px;top:151px;" width="52" height="52" viewBox="0 0 52 52"><circle cx="33" cy="19" r="17.5" fill="none" stroke="#d6d6d6" stroke-width="1.7"/><path d="M20.5 31.5 L1 51" stroke="#d6d6d6" stroke-width="1.7"/></svg>
<span class="t" style="left:2082.5px;top:206.5px;font-size:22px;line-height:29px;color:#ffffff;transform:scaleX(0.8209);">検索と</span>
<span class="t" style="left:2079.0px;top:233.0px;font-size:22px;line-height:29px;color:#ffffff;transform:scaleX(0.9318);">選択</span>
<svg class="a" style="left:2127.8px;top:242.525px" width="12.4" height="8.95" viewBox="-2 -2 12.4 8.95"><path d="M0 0 L4.2 4.95 L8.4 0" fill="none" stroke="#ffffff" stroke-width="1.9" stroke-linecap="round" stroke-linejoin="round"/></svg>
<span class="t" style="left:1989.5px;top:280.0px;font-size:21.5px;line-height:28px;color:#ffffff;transform:scaleX(0.9318);">編集</span>
<div class="a" style="left:2160.25px;top:145px;width:1.5px;height:157px;background:#5c5c5c;"></div>
<svg class="a" style="left:2187px;top:151px;" width="50" height="50" viewBox="0 0 50 50"><g fill="none" stroke="#d9480f" stroke-width="1.7"><rect x="1" y="1" width="48" height="48"/><rect x="5.5" y="5.5" width="16" height="16"/><rect x="28" y="5.5" width="16" height="16"/><rect x="5.5" y="28" width="16" height="16"/><rect x="28" y="28" width="16" height="16"/></g></svg>
<span class="t" style="left:2196.5px;top:206.5px;font-size:22px;line-height:29px;color:#ffffff;transform:scaleX(0.6739);">アド</span>
<span class="t" style="left:2197.0px;top:233.0px;font-size:22px;line-height:29px;color:#ffffff;transform:scaleX(0.6522);">イン</span>
<span class="t" style="left:2182.0px;top:280.0px;font-size:21.5px;line-height:28px;color:#ffffff;transform:scaleX(0.6522);">アドイン</span>
<div class="a" style="left:2259.75px;top:145px;width:1.5px;height:157px;background:#5c5c5c;"></div>
<svg class="a" style="left:2290px;top:152px;" width="52" height="48" viewBox="0 0 52 48"><defs>
<linearGradient id="cg1" x1="0" y1="0" x2="0" y2="1"><stop offset="0" stop-color="#2a7fe8"/><stop offset=".45" stop-color="#35c3a0"/><stop offset=".8" stop-color="#f3d32c"/><stop offset="1" stop-color="#f08a2c"/></linearGradient>
<linearGradient id="cg2" x1="0" y1="0" x2="0" y2="1"><stop offset="0" stop-color="#a754e8"/><stop offset=".5" stop-color="#e8509a"/><stop offset="1" stop-color="#f59a4a"/></linearGradient>
<linearGradient id="cg3" x1="0" y1="0" x2="1" y2="0"><stop offset="0" stop-color="#1f5fd0"/><stop offset="1" stop-color="#3aa0f0"/></linearGradient></defs>
<path d="M13 1 H30 Q36 1 37.5 7 L39 12 H30 Q25 12 23.5 17 L19.5 31 Q18 35 13 35 H6 Q0 35 1.5 28 L7 7 Q8.5 1 13 1 Z" fill="url(#cg1)"/>
<path d="M22 1 H31 Q36 1 37.5 6 L39.5 12.5 H30 Q28 5 22 1 Z" fill="url(#cg3)"/>
<path d="M39 47 H22 Q16 47 14.5 41 L13 36 H22 Q27 36 28.5 31 L32.5 17 Q34 13 39 13 H46 Q52 13 50.5 20 L45 41 Q43.5 47 39 47 Z" fill="url(#cg2)"/>
<path d="M13 35 Q18 35 19.5 31 L21 26 L23 36 H13 Z" fill="#e8563a" opacity=".85"/></svg>
<span class="t" style="left:2282.3px;top:206.5px;font-size:22.5px;line-height:29px;color:#ffffff;transform:scaleX(0.9851);">Copilot</span>
<div class="a" style="left:2369.25px;top:145px;width:1.5px;height:157px;background:#5c5c5c;"></div>
<div class="a" style="left:2398px;top:148px;width:55px;height:56px;background:#d0623f;"></div>
<svg class="a" style="left:2398px;top:148px;" width="55" height="56" viewBox="0 0 55 56"><g transform="translate(27.5 28)"><path d="M0 -3.5 L0 -19" stroke="#f2ece4" stroke-width="2.6" stroke-linecap="round" transform="rotate(0)"/><path d="M0 -3.5 L0 -17" stroke="#f2ece4" stroke-width="2.6" stroke-linecap="round" transform="rotate(28)"/><path d="M0 -3.5 L0 -20" stroke="#f2ece4" stroke-width="2.6" stroke-linecap="round" transform="rotate(55)"/><path d="M0 -3.5 L0 -18" stroke="#f2ece4" stroke-width="2.6" stroke-linecap="round" transform="rotate(85)"/><path d="M0 -3.5 L0 -17" stroke="#f2ece4" stroke-width="2.6" stroke-linecap="round" transform="rotate(112)"/><path d="M0 -3.5 L0 -19" stroke="#f2ece4" stroke-width="2.6" stroke-linecap="round" transform="rotate(140)"/><path d="M0 -3.5 L0 -18" stroke="#f2ece4" stroke-width="2.6" stroke-linecap="round" transform="rotate(168)"/><path d="M0 -3.5 L0 -17" stroke="#f2ece4" stroke-width="2.6" stroke-linecap="round" transform="rotate(195)"/><path d="M0 -3.5 L0 -19" stroke="#f2ece4" stroke-width="2.6" stroke-linecap="round" transform="rotate(222)"/><path d="M0 -3.5 L0 -20" stroke="#f2ece4" stroke-width="2.6" stroke-linecap="round" transform="rotate(250)"/><path d="M0 -3.5 L0 -17" stroke="#f2ece4" stroke-width="2.6" stroke-linecap="round" transform="rotate(278)"/><path d="M0 -3.5 L0 -18" stroke="#f2ece4" stroke-width="2.6" stroke-linecap="round" transform="rotate(305)"/><path d="M0 -3.5 L0 -17" stroke="#f2ece4" stroke-width="2.6" stroke-linecap="round" transform="rotate(333)"/><circle r="4.5" fill="#f2ece4"/></g></svg>
<span class="t" style="left:2391.3px;top:206.5px;font-size:22.5px;line-height:29px;color:#ffffff;transform:scaleX(0.9676);">Claude</span>
<span class="t" style="left:2391.3px;top:279.5px;font-size:22.5px;line-height:29px;color:#ffffff;transform:scaleX(0.9676);">Claude</span>
<div class="a" style="left:2478.25px;top:145px;width:1.5px;height:157px;background:#5c5c5c;"></div>
<svg class="a" style="left:2512px;top:283px;" width="18" height="11" viewBox="0 0 18 11"><path d="M1 1 L9 9.5 L17 1" fill="none" stroke="#fff" stroke-width="1.7" stroke-linecap="round" stroke-linejoin="round"/></svg>
<div class="a" style="left:14px;top:326px;width:314px;height:48.7px;background:#262626;border:1.5px solid #4c4c4c;box-sizing:border-box;border-radius:8px;"></div>
<span class="t" style="left:22.0px;top:336.5px;font-size:25.5px;line-height:33px;color:#f0f0f0;transform:scaleX(0.9134);">A1</span>
<svg class="a" style="left:305px;top:347px;" width="18" height="11" viewBox="0 0 18 11"><path d="M1 1 L9 9.5 L17 1" fill="none" stroke="#e0e0e0" stroke-width="1.6" stroke-linecap="round" stroke-linejoin="round"/></svg>
<div class="a" style="left:343.3px;top:342px;width:3.6px;height:3.6px;background:#e0e0e0;border-radius:0.8px;"></div>
<div class="a" style="left:343.3px;top:349px;width:3.6px;height:3.6px;background:#e0e0e0;border-radius:0.8px;"></div>
<div class="a" style="left:343.3px;top:356px;width:3.6px;height:3.6px;background:#e0e0e0;border-radius:0.8px;"></div>
<div class="a" style="left:363px;top:326px;width:149.5px;height:48.7px;background:#262626;border:1.5px solid #4c4c4c;box-sizing:border-box;border-radius:8px;"></div>
<svg class="a" style="left:374px;top:340px;" width="22" height="22" viewBox="0 0 22 22"><path d="M1 1 L21 21 M21 1 L1 21" stroke="#7a7a7a" stroke-width="1.7"/></svg>
<svg class="a" style="left:413px;top:340px;" width="29" height="22" viewBox="0 0 29 22"><path d="M1 12 L9.5 20.5 L28 1.5" fill="none" stroke="#7a7a7a" stroke-width="1.7"/></svg>
<span class="t" style="left:456.0px;top:332.5px;font-size:27px;line-height:35px;color:#d8d8d8;font-weight:700;font-family:'Liberation Serif',serif;font-style:italic;transform:scaleX(1.1111);">fx</span>
<svg class="a" style="left:491px;top:347px;" width="18" height="11" viewBox="0 0 18 11"><path d="M1 1 L8.5 9 L16 1" fill="none" stroke="#bdbdbd" stroke-width="1.5" stroke-linecap="round" stroke-linejoin="round"/></svg>
<div class="a" style="left:519px;top:326px;width:2027px;height:48.7px;background:#262626;border:1.5px solid #4c4c4c;box-sizing:border-box;border-radius:8px;"></div>
<span class="t" style="left:541.0px;top:333.5px;font-size:24px;line-height:31px;color:#d4d4d4;transform:scaleX(1.0483);">業務棚卸表テンプレート</span>
<svg class="a" style="left:2521px;top:343px;" width="18" height="12" viewBox="0 0 18 12"><path d="M1 1 L9 10 L17 1" fill="none" stroke="#d0d0d0" stroke-width="1.6" stroke-linecap="round" stroke-linejoin="round"/></svg>
<div class="a" style="left:0;top:0;width:2525px;height:1261px;overflow:hidden">
<div class="a" style="left:47px;top:387px;width:2478px;height:33px;background:#666666;"></div>
<div class="a" style="left:94px;top:388px;width:1px;height:31px;background:#9a9a9a;"></div>
<div class="a" style="left:175px;top:388px;width:1px;height:31px;background:#9a9a9a;"></div>
<div class="a" style="left:440px;top:388px;width:1px;height:31px;background:#9a9a9a;"></div>
<div class="a" style="left:728px;top:388px;width:1px;height:31px;background:#9a9a9a;"></div>
<div class="a" style="left:993px;top:388px;width:1px;height:31px;background:#9a9a9a;"></div>
<div class="a" style="left:1352px;top:388px;width:1px;height:31px;background:#9a9a9a;"></div>
<div class="a" style="left:1781px;top:388px;width:1px;height:31px;background:#9a9a9a;"></div>
<div class="a" style="left:1900px;top:388px;width:1px;height:31px;background:#9a9a9a;"></div>
<div class="a" style="left:2019px;top:388px;width:1px;height:31px;background:#9a9a9a;"></div>
<div class="a" style="left:2077px;top:388px;width:1px;height:31px;background:#9a9a9a;"></div>
<div class="a" style="left:2190px;top:388px;width:1px;height:31px;background:#9a9a9a;"></div>
<div class="a" style="left:2288px;top:388px;width:1px;height:31px;background:#9a9a9a;"></div>
<div class="a" style="left:2386px;top:388px;width:1px;height:31px;background:#9a9a9a;"></div>
<div class="a" style="left:2484px;top:388px;width:1px;height:31px;background:#9a9a9a;"></div>
<span class="t" style="left:63.2px;top:389.5px;font-size:23.5px;line-height:31px;color:#ffffff;">A</span>
<span class="t" style="left:127.7px;top:389.5px;font-size:23.5px;line-height:31px;color:#ffffff;">B</span>
<span class="t" style="left:300.0px;top:389.5px;font-size:23.5px;line-height:31px;color:#ffffff;">C</span>
<span class="t" style="left:576.5px;top:389.5px;font-size:23.5px;line-height:31px;color:#ffffff;">D</span>
<span class="t" style="left:853.7px;top:389.5px;font-size:23.5px;line-height:31px;color:#ffffff;">E</span>
<span class="t" style="left:1166.3px;top:389.5px;font-size:23.5px;line-height:31px;color:#ffffff;">F</span>
<span class="t" style="left:1558.4px;top:389.5px;font-size:23.5px;line-height:31px;color:#ffffff;">G</span>
<span class="t" style="left:1833.0px;top:389.5px;font-size:23.5px;line-height:31px;color:#ffffff;">H</span>
<span class="t" style="left:1957.2px;top:389.5px;font-size:23.5px;line-height:31px;color:#ffffff;">I</span>
<span class="t" style="left:2043.1px;top:389.5px;font-size:23.5px;line-height:31px;color:#ffffff;">J</span>
<span class="t" style="left:2126.7px;top:389.5px;font-size:23.5px;line-height:31px;color:#ffffff;">K</span>
<span class="t" style="left:2233.5px;top:389.5px;font-size:23.5px;line-height:31px;color:#ffffff;">L</span>
<span class="t" style="left:2328.2px;top:389.5px;font-size:23.5px;line-height:31px;color:#ffffff;">M</span>
<span class="t" style="left:2427.5px;top:389.5px;font-size:23.5px;line-height:31px;color:#ffffff;">N</span>
<svg class="a" style="left:18px;top:391px;" width="27" height="26" viewBox="0 0 27 26"><path d="M26 0.5 V25.5 H1 Z" fill="#6a6a6a"/></svg>
<div class="a" style="left:0px;top:420px;width:47px;height:93px;background:#666666;"></div>
<span class="t" style="left:17.2px;top:483.0px;font-size:22.5px;line-height:29px;color:#ececec;">1</span>
<div class="a" style="left:0px;top:512px;width:47px;height:1.2px;background:#777777;"></div>
<span class="t" style="left:17.2px;top:525.0px;font-size:22.5px;line-height:29px;color:#ececec;">2</span>
<div class="a" style="left:0px;top:554px;width:47px;height:1.2px;background:#777777;"></div>
<span class="t" style="left:17.2px;top:575.0px;font-size:22.5px;line-height:29px;color:#ececec;">3</span>
<div class="a" style="left:0px;top:604px;width:47px;height:1.2px;background:#777777;"></div>
<span class="t" style="left:17.2px;top:695.0px;font-size:22.5px;line-height:29px;color:#ececec;">4</span>
<div class="a" style="left:0px;top:724px;width:47px;height:1.2px;background:#777777;"></div>
<span class="t" style="left:17.2px;top:737.0px;font-size:22.5px;line-height:29px;color:#ececec;">5</span>
<div class="a" style="left:0px;top:766px;width:47px;height:1.2px;background:#777777;"></div>
<span class="t" style="left:17.2px;top:779.0px;font-size:22.5px;line-height:29px;color:#ececec;">6</span>
<div class="a" style="left:0px;top:808px;width:47px;height:1.2px;background:#777777;"></div>
<span class="t" style="left:17.2px;top:821.0px;font-size:22.5px;line-height:29px;color:#ececec;">7</span>
<div class="a" style="left:0px;top:850px;width:47px;height:1.2px;background:#777777;"></div>
<span class="t" style="left:17.2px;top:863.0px;font-size:22.5px;line-height:29px;color:#ececec;">8</span>
<div class="a" style="left:0px;top:892px;width:47px;height:1.2px;background:#777777;"></div>
<span class="t" style="left:17.2px;top:905.0px;font-size:22.5px;line-height:29px;color:#ececec;">9</span>
<div class="a" style="left:0px;top:934px;width:47px;height:1.2px;background:#777777;"></div>
<span class="t" style="left:11.0px;top:947.0px;font-size:22.5px;line-height:29px;color:#ececec;">10</span>
<div class="a" style="left:0px;top:976px;width:47px;height:1.2px;background:#777777;"></div>
<span class="t" style="left:11.8px;top:989.0px;font-size:22.5px;line-height:29px;color:#ececec;">11</span>
<div class="a" style="left:0px;top:1018px;width:47px;height:1.2px;background:#777777;"></div>
<span class="t" style="left:11.0px;top:1031.0px;font-size:22.5px;line-height:29px;color:#ececec;">12</span>
<div class="a" style="left:0px;top:1060px;width:47px;height:1.2px;background:#777777;"></div>
<span class="t" style="left:11.0px;top:1073.0px;font-size:22.5px;line-height:29px;color:#ececec;">13</span>
<div class="a" style="left:0px;top:1102px;width:47px;height:1.2px;background:#777777;"></div>
<span class="t" style="left:11.0px;top:1115.0px;font-size:22.5px;line-height:29px;color:#ececec;">14</span>
<div class="a" style="left:0px;top:1144px;width:47px;height:1.2px;background:#777777;"></div>
<span class="t" style="left:11.0px;top:1157.0px;font-size:22.5px;line-height:29px;color:#ececec;">15</span>
<div class="a" style="left:0px;top:1186px;width:47px;height:1.2px;background:#777777;"></div>
<span class="t" style="left:11.0px;top:1199.0px;font-size:22.5px;line-height:29px;color:#ececec;">16</span>
<div class="a" style="left:0px;top:1228px;width:47px;height:1.2px;background:#777777;"></div>
<span class="t" style="left:11.0px;top:1241.0px;font-size:22.5px;line-height:29px;color:#ececec;">17</span>
<div class="a" style="left:47px;top:420px;width:2536px;height:93px;background:#203864;"></div>
<div class="a" style="left:47px;top:513px;width:2536px;height:42px;background:#bdd7ee;"></div>
<div class="a" style="left:47px;top:555px;width:129px;height:50px;background:#203864;"></div>
<div class="a" style="left:176px;top:555px;width:1844px;height:50px;background:#2e75b6;"></div>
<div class="a" style="left:2020px;top:555px;width:563px;height:50px;background:#1f6b5c;"></div>
<div class="a" style="left:47px;top:605px;width:129px;height:120px;background:#203864;"></div>
<div class="a" style="left:176px;top:605px;width:1844px;height:120px;background:#2e75b6;"></div>
<div class="a" style="left:2020px;top:605px;width:563px;height:120px;background:#1f6b5c;"></div>
<div class="a" style="left:47px;top:725px;width:48px;height:42px;background:#bdd7ee;"></div>
<div class="a" style="left:95px;top:725px;width:2194px;height:42px;background:#ffff00;"></div>
<div class="a" style="left:2289px;top:725px;width:98px;height:42px;background:#d9eed3;"></div>
<div class="a" style="left:2387px;top:725px;width:98px;height:42px;background:#ffff00;"></div>
<div class="a" style="left:2485px;top:725px;width:98px;height:42px;background:#d9eed3;"></div>
<div class="a" style="left:47px;top:767px;width:48px;height:42px;background:#bdd7ee;"></div>
<div class="a" style="left:95px;top:767px;width:2194px;height:42px;background:#ffff00;"></div>
<div class="a" style="left:2289px;top:767px;width:98px;height:42px;background:#ebf8e3;"></div>
<div class="a" style="left:2387px;top:767px;width:98px;height:42px;background:#ffff00;"></div>
<div class="a" style="left:2485px;top:767px;width:98px;height:42px;background:#ebf8e3;"></div>
<div class="a" style="left:47px;top:809px;width:48px;height:42px;background:#bdd7ee;"></div>
<div class="a" style="left:95px;top:809px;width:2194px;height:42px;background:#ffff00;"></div>
<div class="a" style="left:2289px;top:809px;width:98px;height:42px;background:#d9eed3;"></div>
<div class="a" style="left:2387px;top:809px;width:98px;height:42px;background:#ffff00;"></div>
<div class="a" style="left:2485px;top:809px;width:98px;height:42px;background:#d9eed3;"></div>
<div class="a" style="left:47px;top:851px;width:48px;height:42px;background:#bdd7ee;"></div>
<div class="a" style="left:95px;top:851px;width:2194px;height:42px;background:#ffff00;"></div>
<div class="a" style="left:2289px;top:851px;width:98px;height:42px;background:#ebf8e3;"></div>
<div class="a" style="left:2387px;top:851px;width:98px;height:42px;background:#ffff00;"></div>
<div class="a" style="left:2485px;top:851px;width:98px;height:42px;background:#ebf8e3;"></div>
<div class="a" style="left:47px;top:893px;width:48px;height:42px;background:#bdd7ee;"></div>
<div class="a" style="left:95px;top:893px;width:2194px;height:42px;background:#ffff00;"></div>
<div class="a" style="left:2289px;top:893px;width:98px;height:42px;background:#d9eed3;"></div>
<div class="a" style="left:2387px;top:893px;width:98px;height:42px;background:#ffff00;"></div>
<div class="a" style="left:2485px;top:893px;width:98px;height:42px;background:#d9eed3;"></div>
<div class="a" style="left:47px;top:935px;width:48px;height:42px;background:#bdd7ee;"></div>
<div class="a" style="left:95px;top:935px;width:2194px;height:42px;background:#ffff00;"></div>
<div class="a" style="left:2289px;top:935px;width:98px;height:42px;background:#ebf8e3;"></div>
<div class="a" style="left:2387px;top:935px;width:98px;height:42px;background:#ffff00;"></div>
<div class="a" style="left:2485px;top:935px;width:98px;height:42px;background:#ebf8e3;"></div>
<div class="a" style="left:47px;top:977px;width:48px;height:42px;background:#bdd7ee;"></div>
<div class="a" style="left:95px;top:977px;width:2194px;height:42px;background:#ffff00;"></div>
<div class="a" style="left:2289px;top:977px;width:98px;height:42px;background:#d9eed3;"></div>
<div class="a" style="left:2387px;top:977px;width:98px;height:42px;background:#ffff00;"></div>
<div class="a" style="left:2485px;top:977px;width:98px;height:42px;background:#d9eed3;"></div>
<div class="a" style="left:47px;top:1019px;width:48px;height:42px;background:#bdd7ee;"></div>
<div class="a" style="left:95px;top:1019px;width:2194px;height:42px;background:#ffff00;"></div>
<div class="a" style="left:2289px;top:1019px;width:98px;height:42px;background:#ebf8e3;"></div>
<div class="a" style="left:2387px;top:1019px;width:98px;height:42px;background:#ffff00;"></div>
<div class="a" style="left:2485px;top:1019px;width:98px;height:42px;background:#ebf8e3;"></div>
<div class="a" style="left:47px;top:1061px;width:48px;height:42px;background:#bdd7ee;"></div>
<div class="a" style="left:95px;top:1061px;width:2194px;height:42px;background:#ffff00;"></div>
<div class="a" style="left:2289px;top:1061px;width:98px;height:42px;background:#d9eed3;"></div>
<div class="a" style="left:2387px;top:1061px;width:98px;height:42px;background:#ffff00;"></div>
<div class="a" style="left:2485px;top:1061px;width:98px;height:42px;background:#d9eed3;"></div>
<div class="a" style="left:47px;top:1103px;width:48px;height:42px;background:#bdd7ee;"></div>
<div class="a" style="left:95px;top:1103px;width:2194px;height:42px;background:#ffff00;"></div>
<div class="a" style="left:2289px;top:1103px;width:98px;height:42px;background:#ebf8e3;"></div>
<div class="a" style="left:2387px;top:1103px;width:98px;height:42px;background:#ffff00;"></div>
<div class="a" style="left:2485px;top:1103px;width:98px;height:42px;background:#ebf8e3;"></div>
<div class="a" style="left:47px;top:1145px;width:48px;height:42px;background:#bdd7ee;"></div>
<div class="a" style="left:95px;top:1145px;width:2194px;height:42px;background:#ffff00;"></div>
<div class="a" style="left:2289px;top:1145px;width:98px;height:42px;background:#d9eed3;"></div>
<div class="a" style="left:2387px;top:1145px;width:98px;height:42px;background:#ffff00;"></div>
<div class="a" style="left:2485px;top:1145px;width:98px;height:42px;background:#d9eed3;"></div>
<div class="a" style="left:47px;top:1187px;width:48px;height:42px;background:#bdd7ee;"></div>
<div class="a" style="left:95px;top:1187px;width:2194px;height:42px;background:#ffff00;"></div>
<div class="a" style="left:2289px;top:1187px;width:98px;height:42px;background:#ebf8e3;"></div>
<div class="a" style="left:2387px;top:1187px;width:98px;height:42px;background:#ffff00;"></div>
<div class="a" style="left:2485px;top:1187px;width:98px;height:42px;background:#ebf8e3;"></div>
<div class="a" style="left:47px;top:1229px;width:48px;height:42px;background:#bdd7ee;"></div>
<div class="a" style="left:95px;top:1229px;width:2194px;height:42px;background:#ffff00;"></div>
<div class="a" style="left:2289px;top:1229px;width:98px;height:42px;background:#d9eed3;"></div>
<div class="a" style="left:2387px;top:1229px;width:98px;height:42px;background:#ffff00;"></div>
<div class="a" style="left:2485px;top:1229px;width:98px;height:42px;background:#d9eed3;"></div>
<div class="a" style="left:47px;top:554px;width:2540px;height:1px;background:#000000;"></div>
<div class="a" style="left:47px;top:604px;width:2540px;height:1px;background:#000000;"></div>
<div class="a" style="left:95px;top:724px;width:2500px;height:1px;background:#000000;"></div>
<div class="a" style="left:95px;top:766px;width:2500px;height:1px;background:#000000;"></div>
<div class="a" style="left:95px;top:808px;width:2500px;height:1px;background:#000000;"></div>
<div class="a" style="left:95px;top:850px;width:2500px;height:1px;background:#000000;"></div>
<div class="a" style="left:95px;top:892px;width:2500px;height:1px;background:#000000;"></div>
<div class="a" style="left:95px;top:934px;width:2500px;height:1px;background:#000000;"></div>
<div class="a" style="left:95px;top:976px;width:2500px;height:1px;background:#000000;"></div>
<div class="a" style="left:95px;top:1018px;width:2500px;height:1px;background:#000000;"></div>
<div class="a" style="left:95px;top:1060px;width:2500px;height:1px;background:#000000;"></div>
<div class="a" style="left:95px;top:1102px;width:2500px;height:1px;background:#000000;"></div>
<div class="a" style="left:95px;top:1144px;width:2500px;height:1px;background:#000000;"></div>
<div class="a" style="left:95px;top:1186px;width:2500px;height:1px;background:#000000;"></div>
<div class="a" style="left:95px;top:1228px;width:2500px;height:1px;background:#000000;"></div>
<div class="a" style="left:47px;top:724px;width:48px;height:1px;background:#000000;"></div>
<div class="a" style="left:48px;top:766px;width:47px;height:1px;background:#000000;"></div>
<div class="a" style="left:48px;top:808px;width:47px;height:1px;background:#000000;"></div>
<div class="a" style="left:48px;top:850px;width:47px;height:1px;background:#000000;"></div>
<div class="a" style="left:48px;top:892px;width:47px;height:1px;background:#000000;"></div>
<div class="a" style="left:48px;top:934px;width:47px;height:1px;background:#000000;"></div>
<div class="a" style="left:48px;top:976px;width:47px;height:1px;background:#000000;"></div>
<div class="a" style="left:48px;top:1018px;width:47px;height:1px;background:#000000;"></div>
<div class="a" style="left:48px;top:1060px;width:47px;height:1px;background:#000000;"></div>
<div class="a" style="left:48px;top:1102px;width:47px;height:1px;background:#000000;"></div>
<div class="a" style="left:48px;top:1144px;width:47px;height:1px;background:#000000;"></div>
<div class="a" style="left:48px;top:1186px;width:47px;height:1px;background:#000000;"></div>
<div class="a" style="left:48px;top:1228px;width:47px;height:1px;background:#000000;"></div>
<div class="a" style="left:2019px;top:513px;width:1px;height:42px;background:#000000;"></div>
<div class="a" style="left:2386px;top:513px;width:1px;height:42px;background:#000000;"></div>
<div class="a" style="left:175px;top:555px;width:1px;height:50px;background:#203864;"></div>
<div class="a" style="left:2019px;top:555px;width:1px;height:50px;background:#000000;"></div>
<div class="a" style="left:175px;top:605px;width:1px;height:656px;background:#000000;"></div>
<div class="a" style="left:440px;top:605px;width:1px;height:656px;background:#000000;"></div>
<div class="a" style="left:728px;top:605px;width:1px;height:656px;background:#000000;"></div>
<div class="a" style="left:993px;top:605px;width:1px;height:656px;background:#000000;"></div>
<div class="a" style="left:1352px;top:605px;width:1px;height:656px;background:#000000;"></div>
<div class="a" style="left:1781px;top:605px;width:1px;height:656px;background:#000000;"></div>
<div class="a" style="left:1900px;top:605px;width:1px;height:656px;background:#000000;"></div>
<div class="a" style="left:2019px;top:605px;width:1px;height:656px;background:#000000;"></div>
<div class="a" style="left:2077px;top:605px;width:1px;height:656px;background:#000000;"></div>
<div class="a" style="left:2190px;top:605px;width:1px;height:656px;background:#000000;"></div>
<div class="a" style="left:2288px;top:605px;width:1px;height:656px;background:#000000;"></div>
<div class="a" style="left:2386px;top:605px;width:1px;height:656px;background:#000000;"></div>
<div class="a" style="left:2484px;top:605px;width:1px;height:656px;background:#000000;"></div>
<div class="a" style="left:46px;top:419px;width:2600px;height:95px;border:2px solid #1e7145;box-sizing:border-box;"></div>
<div class="a" style="left:48px;top:421px;width:2600px;height:91px;border:1.2px solid #ffffff;box-sizing:border-box;"></div>
<span class="t" style="left:2257.5px;top:443.5px;font-size:35px;line-height:46px;color:#ffffff;font-weight:700;letter-spacing:4.2px;">業務棚卸表テンプレート</span>
<span class="t" style="left:53.0px;top:520.5px;font-size:20px;line-height:26px;color:#000;letter-spacing:3px;-webkit-text-stroke:0.45px #000;">部門名：総務部</span>
<span class="t" style="left:2025.0px;top:520.5px;font-size:20px;line-height:26px;color:#000;letter-spacing:3px;-webkit-text-stroke:0.45px #000;">作成日：</span>
<span class="t" style="left:2116.0px;top:519.0px;font-size:21.3px;line-height:28px;color:#000;font-weight:700;">2026/03/23</span>
<span class="t" style="left:2392.0px;top:520.5px;font-size:20px;line-height:26px;color:#000;letter-spacing:3px;-webkit-text-stroke:0.45px #000;">作成者：山田 花子</span>
<span class="t" style="left:67.3px;top:566.5px;font-size:20px;line-height:26px;color:#ffffff;letter-spacing:3.1px;-webkit-text-stroke:0.4px #ffffff;">基本情報</span>
<span class="t" style="left:1052.8px;top:566.5px;font-size:20px;line-height:26px;color:#ffffff;letter-spacing:3.1px;-webkit-text-stroke:0.4px #ffffff;">業務情報</span>
<span class="t" style="left:2305.3px;top:566.5px;font-size:20px;line-height:26px;color:#ffffff;letter-spacing:3.1px;-webkit-text-stroke:0.4px #ffffff;">工数情報</span>
<span class="t" style="left:54.2px;top:650.5px;font-size:21px;line-height:27px;color:#ffffff;font-weight:700;transform:scaleX(0.9607);">No.</span>
<span class="t" style="left:103.5px;top:653.5px;font-size:18px;line-height:23px;color:#ffffff;letter-spacing:0.7px;-webkit-text-stroke:0.4px #ffffff;transform:scaleX(1.1000);">部門名</span>
<span class="t" style="left:287.3px;top:642.5px;font-size:18px;line-height:23px;color:#ffffff;letter-spacing:0.7px;-webkit-text-stroke:0.4px #ffffff;transform:scaleX(1.1000);">業務</span>
<span class="t" style="left:266.7px;top:665.0px;font-size:18px;line-height:23px;color:#ffffff;letter-spacing:0.7px;-webkit-text-stroke:0.4px #ffffff;transform:scaleX(1.1000);">カテゴリ</span>
<span class="t" style="left:553.5px;top:653.5px;font-size:18px;line-height:23px;color:#ffffff;letter-spacing:0.7px;-webkit-text-stroke:0.4px #ffffff;transform:scaleX(1.1000);">大分類</span>
<span class="t" style="left:830.0px;top:653.5px;font-size:18px;line-height:23px;color:#ffffff;letter-spacing:0.7px;-webkit-text-stroke:0.4px #ffffff;transform:scaleX(1.1000);">中分類</span>
<span class="t" style="left:1142.0px;top:642.5px;font-size:18px;line-height:23px;color:#ffffff;letter-spacing:0.7px;-webkit-text-stroke:0.4px #ffffff;transform:scaleX(1.1000);">小分類</span>
<span class="t" style="left:1121.5px;top:665.0px;font-size:18px;line-height:23px;color:#ffffff;letter-spacing:0.7px;-webkit-text-stroke:0.4px #ffffff;transform:scaleX(1.1000);">（業務名）</span>
<span class="t" style="left:1525.7px;top:641.0px;font-size:18px;line-height:23px;color:#ffffff;letter-spacing:0.7px;-webkit-text-stroke:0.4px #ffffff;transform:scaleX(1.1000);">業務概要</span>
<span class="t" style="left:1503.7px;top:666.0px;font-size:18px;line-height:23px;color:#ffffff;letter-spacing:0.7px;-webkit-text-stroke:0.4px #ffffff;transform:scaleX(1.1000);">（30字以内）</span>
<span class="t" style="left:1789.5px;top:653.5px;font-size:18px;line-height:23px;color:#ffffff;letter-spacing:0.7px;-webkit-text-stroke:0.4px #ffffff;transform:scaleX(1.1000);">主担当者名</span>
<span class="t" style="left:1908.5px;top:653.5px;font-size:18px;line-height:23px;color:#ffffff;letter-spacing:0.7px;-webkit-text-stroke:0.4px #ffffff;transform:scaleX(1.1000);">副担当者名</span>
<span class="t" style="left:2027.3px;top:653.5px;font-size:18px;line-height:23px;color:#ffffff;letter-spacing:0.7px;-webkit-text-stroke:0.4px #ffffff;transform:scaleX(1.1000);">頻度</span>
<span class="t" style="left:2086.9px;top:628.5px;font-size:18px;line-height:23px;color:#ffffff;letter-spacing:0.7px;-webkit-text-stroke:0.4px #ffffff;transform:scaleX(1.1000);">1回あたり</span>
<span class="t" style="left:2092.7px;top:653.5px;font-size:18px;line-height:23px;color:#ffffff;letter-spacing:0.7px;-webkit-text-stroke:0.4px #ffffff;transform:scaleX(1.1000);">所要時間</span>
<span class="t" style="left:2103.0px;top:678.5px;font-size:18px;line-height:23px;color:#ffffff;letter-spacing:0.7px;-webkit-text-stroke:0.4px #ffffff;transform:scaleX(1.1000);">（分）</span>
<span class="t" style="left:2218.8px;top:628.5px;font-size:18px;line-height:23px;color:#ffffff;letter-spacing:0.7px;-webkit-text-stroke:0.4px #ffffff;transform:scaleX(1.1000);">月間</span>
<span class="t" style="left:2198.2px;top:653.5px;font-size:18px;line-height:23px;color:#ffffff;letter-spacing:0.7px;-webkit-text-stroke:0.4px #ffffff;transform:scaleX(1.1000);">実施回数</span>
<span class="t" style="left:2208.5px;top:678.5px;font-size:18px;line-height:23px;color:#ffffff;letter-spacing:0.7px;-webkit-text-stroke:0.4px #ffffff;transform:scaleX(1.1000);">（回）</span>
<span class="t" style="left:2316.8px;top:628.5px;font-size:18px;line-height:23px;color:#ffffff;letter-spacing:0.7px;-webkit-text-stroke:0.4px #ffffff;transform:scaleX(1.1000);">月間</span>
<span class="t" style="left:2296.2px;top:653.5px;font-size:18px;line-height:23px;color:#ffffff;letter-spacing:0.7px;-webkit-text-stroke:0.4px #ffffff;transform:scaleX(1.1000);">合計時間</span>
<span class="t" style="left:2296.2px;top:678.5px;font-size:18px;line-height:23px;color:#ffffff;letter-spacing:0.7px;-webkit-text-stroke:0.4px #ffffff;transform:scaleX(1.1000);">（時間）</span>
<span class="t" style="left:2394.2px;top:641.0px;font-size:18px;line-height:23px;color:#ffffff;letter-spacing:0.7px;-webkit-text-stroke:0.4px #ffffff;transform:scaleX(1.1000);">担当者数</span>
<span class="t" style="left:2404.5px;top:666.0px;font-size:18px;line-height:23px;color:#ffffff;letter-spacing:0.7px;-webkit-text-stroke:0.4px #ffffff;transform:scaleX(1.1000);">（人）</span>
<span class="t" style="left:2513.8px;top:628.5px;font-size:18px;line-height:23px;color:#ffffff;letter-spacing:0.7px;-webkit-text-stroke:0.4px #ffffff;transform:scaleX(1.1000);">月間</span>
<span class="t" style="left:2503.5px;top:653.5px;font-size:18px;line-height:23px;color:#ffffff;letter-spacing:0.7px;-webkit-text-stroke:0.4px #ffffff;transform:scaleX(1.1000);">総工数</span>
<span class="t" style="left:2493.2px;top:678.5px;font-size:18px;line-height:23px;color:#ffffff;letter-spacing:0.7px;-webkit-text-stroke:0.4px #ffffff;transform:scaleX(1.1000);">（人時）</span>
<span class="t" style="left:64.9px;top:731.5px;font-size:22px;line-height:29px;color:#8c8c8c;">1</span>
<span class="t" style="left:98.7px;top:732.5px;font-size:19.5px;line-height:25px;color:#000;letter-spacing:2.0px;">総務部</span>
<span class="t" style="left:179.7px;top:732.5px;font-size:19.5px;line-height:25px;color:#000;letter-spacing:2.0px;">コア業務</span>
<span class="t" style="left:444.7px;top:732.5px;font-size:19.5px;line-height:25px;color:#000;letter-spacing:2.0px;">給与・勤怠管理</span>
<span class="t" style="left:997.7px;top:732.5px;font-size:19.5px;line-height:25px;color:#000;letter-spacing:2.0px;">勤怠データ集計・確認</span>
<span class="t" style="left:1356.7px;top:732.5px;font-size:19.5px;line-height:25px;color:#000;letter-spacing:2.0px;">各部門の勤怠を収集・集計・確認</span>
<span class="t" style="left:1785.7px;top:732.5px;font-size:19.5px;line-height:25px;color:#000;letter-spacing:2.0px;">鈴木 一郎</span>
<span class="t" style="left:2023.7px;top:732.5px;font-size:19.5px;line-height:25px;color:#000;letter-spacing:2.0px;">月次</span>
<span class="t" style="left:2080.5px;top:731.5px;font-size:21.3px;line-height:28px;color:#000;font-weight:700;">60</span>
<span class="t" style="left:2193.5px;top:731.5px;font-size:21.3px;line-height:28px;color:#000;font-weight:700;">1</span>
<span class="t" style="left:2292.5px;top:731.0px;font-size:23px;line-height:30px;color:#3d5a32;">1.0</span>
<span class="t" style="left:2389.5px;top:731.5px;font-size:21.3px;line-height:28px;color:#000;font-weight:700;">1</span>
<span class="t" style="left:2488.5px;top:731.0px;font-size:23px;line-height:30px;color:#3d5a32;">1.0</span>
<span class="t" style="left:64.9px;top:773.5px;font-size:22px;line-height:29px;color:#8c8c8c;">2</span>
<span class="t" style="left:98.7px;top:774.5px;font-size:19.5px;line-height:25px;color:#000;letter-spacing:2.0px;">総務部</span>
<span class="t" style="left:179.7px;top:774.5px;font-size:19.5px;line-height:25px;color:#000;letter-spacing:2.0px;">コア業務</span>
<span class="t" style="left:444.7px;top:774.5px;font-size:19.5px;line-height:25px;color:#000;letter-spacing:2.0px;">給与・勤怠管理</span>
<span class="t" style="left:997.7px;top:774.5px;font-size:19.5px;line-height:25px;color:#000;letter-spacing:2.0px;">給与計算・振込処理</span>
<span class="t" style="left:1356.7px;top:774.5px;font-size:19.5px;line-height:25px;color:#000;letter-spacing:2.0px;">給与明細作成・銀行振込データ作成</span>
<span class="t" style="left:1785.7px;top:774.5px;font-size:19.5px;line-height:25px;color:#000;letter-spacing:2.0px;">鈴木 一郎</span>
<span class="t" style="left:2023.7px;top:774.5px;font-size:19.5px;line-height:25px;color:#000;letter-spacing:2.0px;">月次</span>
<span class="t" style="left:2080.5px;top:773.5px;font-size:21.3px;line-height:28px;color:#000;font-weight:700;">150</span>
<span class="t" style="left:2193.5px;top:773.5px;font-size:21.3px;line-height:28px;color:#000;font-weight:700;">1</span>
<span class="t" style="left:2292.5px;top:773.0px;font-size:23px;line-height:30px;color:#3d5a32;">2.5</span>
<span class="t" style="left:2389.5px;top:773.5px;font-size:21.3px;line-height:28px;color:#000;font-weight:700;">1</span>
<span class="t" style="left:2488.5px;top:773.0px;font-size:23px;line-height:30px;color:#3d5a32;">2.5</span>
<span class="t" style="left:64.9px;top:815.5px;font-size:22px;line-height:29px;color:#8c8c8c;">3</span>
<span class="t" style="left:98.7px;top:816.5px;font-size:19.5px;line-height:25px;color:#000;letter-spacing:2.0px;">総務部</span>
<span class="t" style="left:179.7px;top:816.5px;font-size:19.5px;line-height:25px;color:#000;letter-spacing:2.0px;">サポート業務</span>
<span class="t" style="left:444.7px;top:816.5px;font-size:19.5px;line-height:25px;color:#000;letter-spacing:2.0px;">採用・入退社手続き</span>
<span class="t" style="left:997.7px;top:816.5px;font-size:19.5px;line-height:25px;color:#000;letter-spacing:2.0px;">社会保険手続き（入退社）</span>
<span class="t" style="left:1356.7px;top:816.5px;font-size:19.5px;line-height:25px;color:#000;letter-spacing:2.0px;">入退社時の社保加入・脱退申請</span>
<span class="t" style="left:1785.7px;top:816.5px;font-size:19.5px;line-height:25px;color:#000;letter-spacing:2.0px;">鈴木 一郎</span>
<span class="t" style="left:1904.7px;top:816.5px;font-size:19.5px;line-height:25px;color:#000;letter-spacing:2.0px;">山田 花子</span>
<span class="t" style="left:2023.7px;top:816.5px;font-size:19.5px;line-height:25px;color:#000;letter-spacing:2.0px;">随時</span>
<span class="t" style="left:2080.5px;top:815.5px;font-size:21.3px;line-height:28px;color:#000;font-weight:700;">120</span>
<span class="t" style="left:2193.5px;top:815.5px;font-size:21.3px;line-height:28px;color:#000;font-weight:700;">2</span>
<span class="t" style="left:2292.5px;top:815.0px;font-size:23px;line-height:30px;color:#3d5a32;">4.0</span>
<span class="t" style="left:2389.5px;top:815.5px;font-size:21.3px;line-height:28px;color:#000;font-weight:700;">2</span>
<span class="t" style="left:2488.5px;top:815.0px;font-size:23px;line-height:30px;color:#3d5a32;">8.0</span>
<span class="t" style="left:64.9px;top:857.5px;font-size:22px;line-height:29px;color:#8c8c8c;">4</span>
<span class="t" style="left:98.7px;top:858.5px;font-size:19.5px;line-height:25px;color:#000;letter-spacing:2.0px;">総務部</span>
<span class="t" style="left:179.7px;top:858.5px;font-size:19.5px;line-height:25px;color:#000;letter-spacing:2.0px;">サポート業務</span>
<span class="t" style="left:444.7px;top:858.5px;font-size:19.5px;line-height:25px;color:#000;letter-spacing:2.0px;">設備・備品管理</span>
<span class="t" style="left:997.7px;top:858.5px;font-size:19.5px;line-height:25px;color:#000;letter-spacing:2.0px;">備品発注・在庫管理</span>
<span class="t" style="left:1356.7px;top:858.5px;font-size:19.5px;line-height:25px;color:#000;letter-spacing:2.0px;">消耗品の在庫確認・発注・受領</span>
<span class="t" style="left:1785.7px;top:858.5px;font-size:19.5px;line-height:25px;color:#000;letter-spacing:2.0px;">山田 花子</span>
<span class="t" style="left:1904.7px;top:858.5px;font-size:19.5px;line-height:25px;color:#000;letter-spacing:2.0px;">鈴木 一郎</span>
<span class="t" style="left:2023.7px;top:858.5px;font-size:19.5px;line-height:25px;color:#000;letter-spacing:2.0px;">週次</span>
<span class="t" style="left:2080.5px;top:857.5px;font-size:21.3px;line-height:28px;color:#000;font-weight:700;">30</span>
<span class="t" style="left:2193.5px;top:857.5px;font-size:21.3px;line-height:28px;color:#000;font-weight:700;">4</span>
<span class="t" style="left:2292.5px;top:857.0px;font-size:23px;line-height:30px;color:#3d5a32;">2.0</span>
<span class="t" style="left:2389.5px;top:857.5px;font-size:21.3px;line-height:28px;color:#000;font-weight:700;">2</span>
<span class="t" style="left:2488.5px;top:857.0px;font-size:23px;line-height:30px;color:#3d5a32;">4.0</span>
<span class="t" style="left:64.9px;top:899.5px;font-size:22px;line-height:29px;color:#8c8c8c;">5</span>
<span class="t" style="left:98.7px;top:900.5px;font-size:19.5px;line-height:25px;color:#000;letter-spacing:2.0px;">総務部</span>
<span class="t" style="left:179.7px;top:900.5px;font-size:19.5px;line-height:25px;color:#000;letter-spacing:2.0px;">サポート業務</span>
<span class="t" style="left:444.7px;top:900.5px;font-size:19.5px;line-height:25px;color:#000;letter-spacing:2.0px;">来客・電話対応</span>
<span class="t" style="left:997.7px;top:900.5px;font-size:19.5px;line-height:25px;color:#000;letter-spacing:2.0px;">来客対応・受付案内</span>
<span class="t" style="left:1356.7px;top:900.5px;font-size:19.5px;line-height:25px;color:#000;letter-spacing:2.0px;">来客受付・案内・お茶出し等</span>
<span class="t" style="left:1785.7px;top:900.5px;font-size:19.5px;line-height:25px;color:#000;letter-spacing:2.0px;">山田 花子</span>
<span class="t" style="left:1904.7px;top:900.5px;font-size:19.5px;line-height:25px;color:#000;letter-spacing:2.0px;">鈴木 一郎</span>
<span class="t" style="left:2023.7px;top:900.5px;font-size:19.5px;line-height:25px;color:#000;letter-spacing:2.0px;">日次</span>
<span class="t" style="left:2080.5px;top:899.5px;font-size:21.3px;line-height:28px;color:#000;font-weight:700;">20</span>
<span class="t" style="left:2193.5px;top:899.5px;font-size:21.3px;line-height:28px;color:#000;font-weight:700;">20</span>
<span class="t" style="left:2292.5px;top:899.0px;font-size:23px;line-height:30px;color:#3d5a32;">6.7</span>
<span class="t" style="left:2389.5px;top:899.5px;font-size:21.3px;line-height:28px;color:#000;font-weight:700;">3</span>
<span class="t" style="left:2488.5px;top:899.0px;font-size:23px;line-height:30px;color:#3d5a32;">20.0</span>
<span class="t" style="left:64.9px;top:941.5px;font-size:22px;line-height:29px;color:#8c8c8c;">6</span>
<span class="t" style="left:98.7px;top:942.5px;font-size:19.5px;line-height:25px;color:#000;letter-spacing:2.0px;">総務部</span>
<span class="t" style="left:179.7px;top:942.5px;font-size:19.5px;line-height:25px;color:#000;letter-spacing:2.0px;">コア業務</span>
<span class="t" style="left:444.7px;top:942.5px;font-size:19.5px;line-height:25px;color:#000;letter-spacing:2.0px;">経費・支払管理</span>
<span class="t" style="left:997.7px;top:942.5px;font-size:19.5px;line-height:25px;color:#000;letter-spacing:2.0px;">請求書受領・ファイリング</span>
<span class="t" style="left:1356.7px;top:942.5px;font-size:19.5px;line-height:25px;color:#000;letter-spacing:2.0px;">郵便・メール請求書の仕分けと保管</span>
<span class="t" style="left:1785.7px;top:942.5px;font-size:19.5px;line-height:25px;color:#000;letter-spacing:2.0px;">山田 花子</span>
<span class="t" style="left:1904.7px;top:942.5px;font-size:19.5px;line-height:25px;color:#000;letter-spacing:2.0px;">鈴木 一郎</span>
<span class="t" style="left:2023.7px;top:942.5px;font-size:19.5px;line-height:25px;color:#000;letter-spacing:2.0px;">月次</span>
<span class="t" style="left:2080.5px;top:941.5px;font-size:21.3px;line-height:28px;color:#000;font-weight:700;">45</span>
<span class="t" style="left:2193.5px;top:941.5px;font-size:21.3px;line-height:28px;color:#000;font-weight:700;">10</span>
<span class="t" style="left:2292.5px;top:941.0px;font-size:23px;line-height:30px;color:#3d5a32;">7.5</span>
<span class="t" style="left:2389.5px;top:941.5px;font-size:21.3px;line-height:28px;color:#000;font-weight:700;">2</span>
<span class="t" style="left:2488.5px;top:941.0px;font-size:23px;line-height:30px;color:#3d5a32;">15.0</span>
<span class="t" style="left:64.9px;top:983.5px;font-size:22px;line-height:29px;color:#8c8c8c;">7</span>
<span class="t" style="left:98.7px;top:984.5px;font-size:19.5px;line-height:25px;color:#000;letter-spacing:2.0px;">総務部</span>
<span class="t" style="left:179.7px;top:984.5px;font-size:19.5px;line-height:25px;color:#000;letter-spacing:2.0px;">サポート業務</span>
<span class="t" style="left:444.7px;top:984.5px;font-size:19.5px;line-height:25px;color:#000;letter-spacing:2.0px;">採用・入退社手続き</span>
<span class="t" style="left:997.7px;top:984.5px;font-size:19.5px;line-height:25px;color:#000;letter-spacing:2.0px;">採用応募者管理・面接日程調整</span>
<span class="t" style="left:1356.7px;top:984.5px;font-size:19.5px;line-height:25px;color:#000;letter-spacing:2.0px;">応募者情報整理と面接スケジュール調整</span>
<span class="t" style="left:1785.7px;top:984.5px;font-size:19.5px;line-height:25px;color:#000;letter-spacing:2.0px;">鈴木 一郎</span>
<span class="t" style="left:1904.7px;top:984.5px;font-size:19.5px;line-height:25px;color:#000;letter-spacing:2.0px;">山田 花子</span>
<span class="t" style="left:2023.7px;top:984.5px;font-size:19.5px;line-height:25px;color:#000;letter-spacing:2.0px;">随時</span>
<span class="t" style="left:2080.5px;top:983.5px;font-size:21.3px;line-height:28px;color:#000;font-weight:700;">30</span>
<span class="t" style="left:2193.5px;top:983.5px;font-size:21.3px;line-height:28px;color:#000;font-weight:700;">4</span>
<span class="t" style="left:2292.5px;top:983.0px;font-size:23px;line-height:30px;color:#3d5a32;">2.0</span>
<span class="t" style="left:2389.5px;top:983.5px;font-size:21.3px;line-height:28px;color:#000;font-weight:700;">2</span>
<span class="t" style="left:2488.5px;top:983.0px;font-size:23px;line-height:30px;color:#3d5a32;">4.0</span>
<span class="t" style="left:64.9px;top:1025.5px;font-size:22px;line-height:29px;color:#8c8c8c;">8</span>
<span class="t" style="left:98.7px;top:1026.5px;font-size:19.5px;line-height:25px;color:#000;letter-spacing:2.0px;">総務部</span>
<span class="t" style="left:179.7px;top:1026.5px;font-size:19.5px;line-height:25px;color:#000;letter-spacing:2.0px;">管理業務</span>
<span class="t" style="left:444.7px;top:1026.5px;font-size:19.5px;line-height:25px;color:#000;letter-spacing:2.0px;">社内文書管理</span>
<span class="t" style="left:997.7px;top:1026.5px;font-size:19.5px;line-height:25px;color:#000;letter-spacing:2.0px;">社内規程・就業規則の管理</span>
<span class="t" style="left:1356.7px;top:1026.5px;font-size:19.5px;line-height:25px;color:#000;letter-spacing:2.0px;">法改正対応の規程改定・最新版保管</span>
<span class="t" style="left:1785.7px;top:1026.5px;font-size:19.5px;line-height:25px;color:#000;letter-spacing:2.0px;">鈴木 一郎</span>
<span class="t" style="left:1904.7px;top:1026.5px;font-size:19.5px;line-height:25px;color:#000;letter-spacing:2.0px;">山田 花子</span>
<span class="t" style="left:2023.7px;top:1026.5px;font-size:19.5px;line-height:25px;color:#000;letter-spacing:2.0px;">年次</span>
<span class="t" style="left:2080.5px;top:1025.5px;font-size:21.3px;line-height:28px;color:#000;font-weight:700;">180</span>
<span class="t" style="left:2193.5px;top:1025.5px;font-size:21.3px;line-height:28px;color:#000;font-weight:700;">1</span>
<span class="t" style="left:2292.5px;top:1025.0px;font-size:23px;line-height:30px;color:#3d5a32;">3.0</span>
<span class="t" style="left:2389.5px;top:1025.5px;font-size:21.3px;line-height:28px;color:#000;font-weight:700;">1</span>
<span class="t" style="left:2488.5px;top:1025.0px;font-size:23px;line-height:30px;color:#3d5a32;">3.0</span>
<span class="t" style="left:64.9px;top:1067.5px;font-size:22px;line-height:29px;color:#8c8c8c;">9</span>
<span class="t" style="left:98.7px;top:1068.5px;font-size:19.5px;line-height:25px;color:#000;letter-spacing:2.0px;">総務部</span>
<span class="t" style="left:179.7px;top:1068.5px;font-size:19.5px;line-height:25px;color:#000;letter-spacing:2.0px;">サポート業務</span>
<span class="t" style="left:444.7px;top:1068.5px;font-size:19.5px;line-height:25px;color:#000;letter-spacing:2.0px;">採用・入退社手続き</span>
<span class="t" style="left:997.7px;top:1068.5px;font-size:19.5px;line-height:25px;color:#000;letter-spacing:2.0px;">新入社員研修資料の作成・案内</span>
<span class="t" style="left:1356.7px;top:1068.5px;font-size:19.5px;line-height:25px;color:#000;letter-spacing:2.0px;">入社時オリエンテーション資料の準備</span>
<span class="t" style="left:1785.7px;top:1068.5px;font-size:19.5px;line-height:25px;color:#000;letter-spacing:2.0px;">山田 花子</span>
<span class="t" style="left:1904.7px;top:1068.5px;font-size:19.5px;line-height:25px;color:#000;letter-spacing:2.0px;">鈴木 一郎</span>
<span class="t" style="left:2023.7px;top:1068.5px;font-size:19.5px;line-height:25px;color:#000;letter-spacing:2.0px;">随時</span>
<span class="t" style="left:2080.5px;top:1067.5px;font-size:21.3px;line-height:28px;color:#000;font-weight:700;">120</span>
<span class="t" style="left:2193.5px;top:1067.5px;font-size:21.3px;line-height:28px;color:#000;font-weight:700;">1</span>
<span class="t" style="left:2292.5px;top:1067.0px;font-size:23px;line-height:30px;color:#3d5a32;">2.0</span>
<span class="t" style="left:2389.5px;top:1067.5px;font-size:21.3px;line-height:28px;color:#000;font-weight:700;">1</span>
<span class="t" style="left:2488.5px;top:1067.0px;font-size:23px;line-height:30px;color:#3d5a32;">2.0</span>
<span class="t" style="left:58.8px;top:1109.5px;font-size:22px;line-height:29px;color:#8c8c8c;">10</span>
<span class="t" style="left:98.7px;top:1110.5px;font-size:19.5px;line-height:25px;color:#000;letter-spacing:2.0px;">総務部</span>
<span class="t" style="left:179.7px;top:1110.5px;font-size:19.5px;line-height:25px;color:#000;letter-spacing:2.0px;">管理業務</span>
<span class="t" style="left:444.7px;top:1110.5px;font-size:19.5px;line-height:25px;color:#000;letter-spacing:2.0px;">社内申請・問い合わせ対応</span>
<span class="t" style="left:997.7px;top:1110.5px;font-size:19.5px;line-height:25px;color:#000;letter-spacing:2.0px;">社内問い合わせ対応（各種申請）</span>
<span class="t" style="left:1356.7px;top:1110.5px;font-size:19.5px;line-height:25px;color:#000;letter-spacing:2.0px;">有休・経費精算等の申請受付・回答</span>
<span class="t" style="left:1785.7px;top:1110.5px;font-size:19.5px;line-height:25px;color:#000;letter-spacing:2.0px;">山田 花子</span>
<span class="t" style="left:1904.7px;top:1110.5px;font-size:19.5px;line-height:25px;color:#000;letter-spacing:2.0px;">鈴木 一郎</span>
<span class="t" style="left:2023.7px;top:1110.5px;font-size:19.5px;line-height:25px;color:#000;letter-spacing:2.0px;">日次</span>
<span class="t" style="left:2080.5px;top:1109.5px;font-size:21.3px;line-height:28px;color:#000;font-weight:700;">15</span>
<span class="t" style="left:2193.5px;top:1109.5px;font-size:21.3px;line-height:28px;color:#000;font-weight:700;">20</span>
<span class="t" style="left:2292.5px;top:1109.0px;font-size:23px;line-height:30px;color:#3d5a32;">5.0</span>
<span class="t" style="left:2389.5px;top:1109.5px;font-size:21.3px;line-height:28px;color:#000;font-weight:700;">3</span>
<span class="t" style="left:2488.5px;top:1109.0px;font-size:23px;line-height:30px;color:#3d5a32;">15.0</span>
<span class="t" style="left:59.6px;top:1151.5px;font-size:22px;line-height:29px;color:#8c8c8c;">11</span>
<span class="t" style="left:58.8px;top:1193.5px;font-size:22px;line-height:29px;color:#8c8c8c;">12</span>
<span class="t" style="left:58.8px;top:1235.5px;font-size:22px;line-height:29px;color:#8c8c8c;">13</span>
<div class="a" style="left:94px;top:387px;width:1.2px;height:875px;background:#9c9c9c;"></div>
<div class="a" style="left:0px;top:724px;width:2525px;height:1.2px;background:#9c9c9c;"></div>
</div>
<div class="a" style="left:2528.5px;top:387px;width:29.5px;height:878px;background:#1b1b1b;border-radius:15px;"></div>
<svg class="a" style="left:2534px;top:396px;" width="17" height="12" viewBox="0 0 17 12"><path d="M8.5 1 L16 11 H1 Z" fill="#9e9e9e" stroke="#9e9e9e" stroke-width="1" stroke-linejoin="round"/></svg>
<div class="a" style="left:2536px;top:417px;width:14px;height:184px;background:#9e9e9e;border-radius:7px;"></div>
<svg class="a" style="left:2534px;top:1242px;" width="17" height="12" viewBox="0 0 17 12"><path d="M1 1 H16 L8.5 11 Z" fill="#9e9e9e" stroke="#9e9e9e" stroke-width="1" stroke-linejoin="round"/></svg>
<div class="a" style="left:0px;top:1317px;width:2560px;height:1.5px;background:#2e2e2e;"></div>
<div class="a" style="left:0px;top:1318.5px;width:2560px;height:37.5px;background:#141414;"></div>
<svg class="a" style="left:39px;top:1279px;" width="10" height="17" viewBox="0 0 10 17"><path d="M9 1 L1.5 8.5 L9 16" fill="none" stroke="#8c8c8c" stroke-width="1.6" stroke-linecap="round" stroke-linejoin="round"/></svg>
<svg class="a" style="left:96px;top:1279px;" width="10" height="17" viewBox="0 0 10 17"><path d="M1 1 L8.5 8.5 L1 16" fill="none" stroke="#8c8c8c" stroke-width="1.6" stroke-linecap="round" stroke-linejoin="round"/></svg>
<div class="a" style="left:191px;top:1268px;width:202px;height:42px;background:#203864;border-radius:7px;"></div>
<svg class="a" style="left:217.5px;top:1277px;" width="22" height="27" viewBox="0 0 22 27"><rect x="1" y="3.5" width="20" height="22.5" rx="2.5" fill="none" stroke="#fff" stroke-width="1.7"/><path d="M6.5 5.5 V2 H9 Q9 0.5 11 0.5 Q13 0.5 13 2 H15.5 V5.5 Z" fill="#203864" stroke="#fff" stroke-width="1.4" stroke-linejoin="round"/><path d="M5 10.5 H17 M5 14 H17 M5 17.5 H17 M5 21 H13" stroke="#fff" stroke-width="1.3"/></svg>
<span class="t" style="left:254.5px;top:1271.5px;font-size:26px;line-height:34px;color:#ffffff;transform:scaleX(0.8993);">使い方･概要</span>
<div class="a" style="left:399.75px;top:1274px;width:1.5px;height:30.5px;background:#4a4a4a;"></div>
<div class="a" style="left:408px;top:1268px;width:192.5px;height:42px;background:#2e75b6;border-radius:7px;"></div>
<svg class="a" style="left:434.5px;top:1277px;" width="26" height="27" viewBox="0 0 26 27"><path d="M3.5 1.5 H13.5 L20.5 8.5 V22.7 Q20.5 25 18.2 25 H3.5 Q1.2 25 1.2 22.7 V3.8 Q1.2 1.5 3.5 1.5 Z" fill="none" stroke="#fff" stroke-width="2" stroke-linejoin="round"/><path d="M13 2 V9 H20" fill="none" stroke="#fff" stroke-width="1.6"/><path d="M5 11 H13 M5 14.3 H10.5" stroke="#fff" stroke-width="1.4"/><path d="M7 22.8 L21.5 10.8" stroke="#2e75b6" stroke-width="7.5" stroke-linecap="round"/><path d="M6.3 23.6 L7.8 18.8 L19.8 8.9 Q21.4 7.8 22.8 9.3 Q24 10.9 22.7 12.3 L10.9 22.2 Z" fill="#2e75b6" stroke="#fff" stroke-width="1.8" stroke-linejoin="round"/><path d="M8.4 19.4 L10.6 21.8 M18.3 10.3 L21 13.5" stroke="#fff" stroke-width="1.3"/></svg>
<span class="t" style="left:470.5px;top:1271.5px;font-size:26px;line-height:34px;color:#ffffff;transform:scaleX(0.9346);">業務棚卸表</span>
<div class="a" style="left:608.25px;top:1274px;width:1.5px;height:30.5px;background:#4a4a4a;"></div>
<div class="a" style="left:615.5px;top:1261px;width:300px;height:49px;background:linear-gradient(#ffffff 0%,#f2f6fb 30%,#a9c5e2 100%);border:1.2px solid #2f2f2f;box-sizing:border-box;border-radius:0 0 8px 8px;border-top:none;"></div>
<svg class="a" style="left:644.5px;top:1273px;" width="26" height="27" viewBox="0 0 26 27"><path d="M3.5 1.5 H13.5 L20.5 8.5 V22.7 Q20.5 25 18.2 25 H3.5 Q1.2 25 1.2 22.7 V3.8 Q1.2 1.5 3.5 1.5 Z" fill="none" stroke="#2a2a2a" stroke-width="2" stroke-linejoin="round"/><path d="M13 2 V9 H20" fill="none" stroke="#2a2a2a" stroke-width="1.6"/><path d="M5 11 H13 M5 14.3 H10.5" stroke="#2a2a2a" stroke-width="1.4"/><path d="M7 22.8 L21.5 10.8" stroke="#dfe9f4" stroke-width="7.5" stroke-linecap="round"/><path d="M6.3 23.6 L7.8 18.8 L19.8 8.9 Q21.4 7.8 22.8 9.3 Q24 10.9 22.7 12.3 L10.9 22.2 Z" fill="#dfe9f4" stroke="#2a2a2a" stroke-width="1.8" stroke-linejoin="round"/><path d="M8.4 19.4 L10.6 21.8 M18.3 10.3 L21 13.5" stroke="#2a2a2a" stroke-width="1.3"/></svg>
<span class="t" style="left:680.5px;top:1267.5px;font-size:26px;line-height:34px;color:#2a2a2a;transform:scaleX(0.9675);">業務棚卸表 (記入例)</span>
<div class="a" style="left:630px;top:1302px;width:271px;height:2.6px;background:#1e7e45;"></div>
<div class="a" style="left:921.75px;top:1274px;width:1.5px;height:30.5px;background:#4a4a4a;"></div>
<div class="a" style="left:930px;top:1268px;width:235px;height:42px;background:#7b2d8e;border-radius:7px;"></div>
<svg class="a" style="left:957px;top:1277px;" width="26" height="27" viewBox="0 0 26 27"><rect x="1" y="1.5" width="24" height="24" rx="4" fill="none" stroke="#fff" stroke-width="1.8"/><rect x="5.5" y="11" width="3.6" height="12" fill="#fff"/><rect x="11.2" y="15" width="3.6" height="8" fill="#fff"/><rect x="17" y="7" width="3.6" height="16" fill="#fff"/></svg>
<span class="t" style="left:995.0px;top:1271.5px;font-size:26px;line-height:34px;color:#ffffff;transform:scaleX(0.6327);">スコアリング</span>
<span class="t" style="left:1100.0px;top:1271.5px;font-size:26px;line-height:34px;color:#ffffff;transform:scaleX(0.9423);">基準</span>
<div class="a" style="left:1171.75px;top:1274px;width:1.5px;height:30.5px;background:#4a4a4a;"></div>
<div class="a" style="left:1180px;top:1268px;width:252.5px;height:42px;background:#375623;border-radius:7px;"></div>
<svg class="a" style="left:1206px;top:1277px;" width="26" height="27" viewBox="0 0 26 27"><rect x="1" y="1.5" width="24" height="24" rx="3.5" fill="none" stroke="#fff" stroke-width="1.8"/><path d="M1 9.5 H25 M1 17.5 H25 M9 1.5 V25.5 M17 1.5 V25.5" stroke="#fff" stroke-width="1.3"/><path d="M2 21 L9.5 13.5 L13 17 L24 5.5" fill="none" stroke="#fff" stroke-width="1.8"/></svg>
<span class="t" style="left:1245.0px;top:1271.5px;font-size:26px;line-height:34px;color:#ffffff;transform:scaleX(0.8654);">集計</span>
<span class="t" style="left:1292.5px;top:1271.5px;font-size:26px;line-height:34px;color:#ffffff;transform:scaleX(0.6702);">ダッシュボード</span>
<div class="a" style="left:1439.25px;top:1274px;width:1.5px;height:30.5px;background:#4a4a4a;"></div>
<svg class="a" style="left:1515px;top:1279px;" width="19" height="19" viewBox="0 0 19 19"><path d="M9.5 0.5 V18.5 M0.5 9.5 H18.5" stroke="#e6e6e6" stroke-width="1.6"/></svg>
<div class="a" style="left:1974.7px;top:1280.5px;width:3.6px;height:3.6px;background:#e0e0e0;border-radius:0.8px;"></div>
<div class="a" style="left:1974.7px;top:1287.5px;width:3.6px;height:3.6px;background:#e0e0e0;border-radius:0.8px;"></div>
<div class="a" style="left:1974.7px;top:1294.5px;width:3.6px;height:3.6px;background:#e0e0e0;border-radius:0.8px;"></div>
<div class="a" style="left:2005px;top:1274px;width:520px;height:28.5px;background:#1b1b1b;border-radius:14px;"></div>
<svg class="a" style="left:2014px;top:1280px;" width="12" height="17" viewBox="0 0 12 17"><path d="M11 1 V16 L1 8.5 Z" fill="#9e9e9e" stroke="#9e9e9e" stroke-width="1" stroke-linejoin="round"/></svg>
<div class="a" style="left:2035px;top:1281px;width:222.5px;height:15px;background:#9e9e9e;border-radius:7.5px;"></div>
<svg class="a" style="left:2505px;top:1280px;" width="12" height="17" viewBox="0 0 12 17"><path d="M1 1 V16 L11 8.5 Z" fill="#9e9e9e" stroke="#9e9e9e" stroke-width="1" stroke-linejoin="round"/></svg>
<span class="t" style="left:20.0px;top:1323.0px;font-size:22px;line-height:29px;color:#f0f0f0;transform:scaleX(0.9318);">準備完了</span>
<svg class="a" style="left:137.5px;top:1326px;" width="26" height="24" viewBox="0 0 26 24"><path d="M1 1.5 H24.2 M1.2 1.5 V21 H9 M24 1.5 V9" fill="none" stroke="#f4f4f4" stroke-width="2.1"/><path d="M4.5 6.6 H21 M4.5 11.5 H10 M4.5 16 H8.5" stroke="#f4f4f4" stroke-width="1.8"/><circle cx="17.5" cy="15.5" r="7.2" fill="#141414" stroke="#f4f4f4" stroke-width="2.1"/><circle cx="17.5" cy="15.5" r="3.4" fill="#f4f4f4"/></svg>
<svg class="a" style="left:192.5px;top:1325px;" width="25" height="26" viewBox="0 0 25 26"><path d="M2.5 5.2 Q6.5 9.5 11.2 8.6 Q16 9.5 20.5 4.2 M8.2 9.5 Q9 14 7 18 L3.8 23.2 M14 9.5 Q13.6 13 15.2 15.5" fill="none" stroke="#f4f4f4" stroke-width="4.6" stroke-linecap="round" stroke-linejoin="round"/><path d="M2.5 5.2 Q6.5 9.5 11.2 8.6 Q16 9.5 20.5 4.2 M8.2 9.5 Q9 14 7 18 L3.8 23.2 M14 9.5 Q13.6 13 15.2 15.5" fill="none" stroke="#141414" stroke-width="1.5" stroke-linecap="round" stroke-linejoin="round"/><circle cx="11.3" cy="3.6" r="2.7" fill="#141414" stroke="#f4f4f4" stroke-width="1.8"/><path d="M13 13.6 L24 24 M24 13.4 L13 24.2" stroke="#f4f4f4" stroke-width="2.1"/></svg>
<span class="t" style="left:224.0px;top:1323.5px;font-size:21.5px;line-height:28px;color:#ffffff;font-weight:700;-webkit-text-stroke:0.7px #ffffff;transform:scaleX(0.7114);">アクセシビリティ:</span>
<span class="t" style="left:369.0px;top:1323.5px;font-size:21.5px;line-height:28px;color:#ffffff;font-weight:700;-webkit-text-stroke:0.7px #ffffff;transform:scaleX(0.8822);">検討が必要です</span>
<svg class="a" style="left:1874px;top:1327px;" width="26" height="24" viewBox="0 0 26 24"><path d="M12 14.5 H1.5 V1.5 H20 V7" fill="none" stroke="#f0f0f0" stroke-width="1.6"/><circle cx="17" cy="16" r="3" fill="none" stroke="#f0f0f0" stroke-width="1.5"/><path d="M17 9.5 V11.5 M17 20.5 V22.5 M10.5 16 H12.5 M21.5 16 H23.5 M12.4 11.4 L13.8 12.8 M20.2 19.2 L21.6 20.6 M12.4 20.6 L13.8 19.2 M20.2 12.8 L21.6 11.4" stroke="#f0f0f0" stroke-width="1.6"/></svg>
<span class="t" style="left:1902.5px;top:1323.5px;font-size:21.5px;line-height:28px;color:#f0f0f0;transform:scaleX(0.9489);">表示設定</span>
<div class="a" style="left:2020px;top:1318.5px;width:70px;height:37.5px;background:#2a2a2a;"></div>
<svg class="a" style="left:2042.5px;top:1326px;" width="24" height="23" viewBox="0 0 24 23"><path d="M1 1 H23 V22 H1 Z M1 8 H23 M1 15 H23 M8.3 1 V22 M15.6 1 V22" fill="none" stroke="#f0f0f0" stroke-width="1.6"/></svg>
<svg class="a" style="left:2112.5px;top:1326px;" width="25" height="23" viewBox="0 0 25 23"><rect x="1" y="1" width="23" height="21" fill="none" stroke="#f0f0f0" stroke-width="1.6"/><rect x="6" y="5" width="13" height="13" fill="none" stroke="#f0f0f0" stroke-width="1.5"/><path d="M8.5 9 H16.5 M8.5 12 H16.5 M8.5 15 H16.5" stroke="#f0f0f0" stroke-width="1.2"/></svg>
<svg class="a" style="left:2182.5px;top:1326px;" width="25" height="23" viewBox="0 0 25 23"><path d="M1 1 H24 V22 H1 Z M9 1 V12 H17 V1" fill="none" stroke="#f0f0f0" stroke-width="1.6"/></svg>
<div class="a" style="left:2241px;top:1336.5px;width:13px;height:1.5px;background:#d0d0d0;"></div>
<div class="a" style="left:2265px;top:1336.5px;width:172.5px;height:1.3px;background:#a8a8a8;"></div>
<div class="a" style="left:2347.5px;top:1327.5px;width:8.5px;height:20px;background:#bdbdbd;"></div>
<svg class="a" style="left:2447.5px;top:1330px;" width="14" height="14" viewBox="0 0 14 14"><path d="M7 0.5 V13.5 M0.5 7 H13.5" stroke="#d0d0d0" stroke-width="1.4"/></svg>
<span class="t" style="left:2485.0px;top:1323.0px;font-size:22px;line-height:29px;color:#f0f0f0;transform:scaleX(1.0483);">100%</span>
</body></html>
